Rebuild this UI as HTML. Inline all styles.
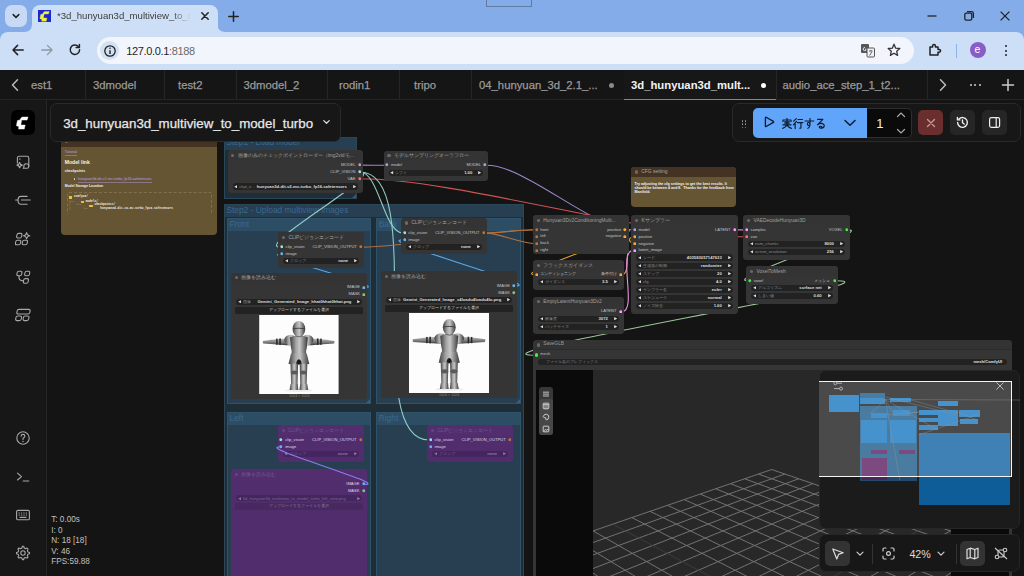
<!DOCTYPE html><html><head><meta charset="utf-8"><style>
html,body{margin:0;padding:0;width:1024px;height:576px;overflow:hidden;background:#141414;font-family:"Liberation Sans", sans-serif;}
*{box-sizing:border-box}
</style></head><body><div style="position:relative;width:1024px;height:576px;overflow:hidden">
<div style="position:absolute;left:47px;top:100px;width:977px;height:476px;background:#141414"></div>
<div style="position:absolute;left:223.7px;top:136.6px;width:133px;height:62.2px;background:rgba(63,120,158,0.25);border:0.8px solid rgba(63,120,158,0.35)"><div style="position:absolute;left:0;top:0;right:0;height:12px;background:rgba(63,120,158,0.25)"></div><div style="position:absolute;left:1.5px;top:0.2px;font-size:8.4px;line-height:1;color:#3a6890;white-space:nowrap">Step1 - Load model</div><div style="position:absolute;right:0;bottom:0;width:0;height:0;border-left:4px solid transparent;border-bottom:4px solid rgba(63,120,158,0.6)"></div></div>
<div style="position:absolute;left:223.9px;top:204.2px;width:300px;height:380px;background:rgba(63,120,158,0.25);border:0.8px solid rgba(63,120,158,0.35)"><div style="position:absolute;left:0;top:0;right:0;height:12px;background:rgba(63,120,158,0.25)"></div><div style="position:absolute;left:1.5px;top:1.0px;font-size:8.4px;line-height:1;color:#3a6890;white-space:nowrap">Step2 - Upload multiview images</div><div style="position:absolute;right:0;bottom:0;width:0;height:0;border-left:4px solid transparent;border-bottom:4px solid rgba(63,120,158,0.6)"></div></div>
<div style="position:absolute;left:227px;top:218.1px;width:143.8px;height:186.3px;background:rgba(63,120,158,0.25);border:0.8px solid rgba(63,120,158,0.35)"><div style="position:absolute;left:0;top:0;right:0;height:12px;background:rgba(63,120,158,0.25)"></div><div style="position:absolute;left:1.5px;top:1.0px;font-size:8.4px;line-height:1;color:#3a6890;white-space:nowrap">Front</div><div style="position:absolute;right:0;bottom:0;width:0;height:0;border-left:4px solid transparent;border-bottom:4px solid rgba(63,120,158,0.6)"></div></div>
<div style="position:absolute;left:376.2px;top:218.1px;width:144.6px;height:186.3px;background:rgba(63,120,158,0.25);border:0.8px solid rgba(63,120,158,0.35)"><div style="position:absolute;left:0;top:0;right:0;height:12px;background:rgba(63,120,158,0.25)"></div><div style="position:absolute;left:1.5px;top:1.0px;font-size:8.4px;line-height:1;color:#3a6890;white-space:nowrap">Back</div><div style="position:absolute;right:0;bottom:0;width:0;height:0;border-left:4px solid transparent;border-bottom:4px solid rgba(63,120,158,0.6)"></div></div>
<div style="position:absolute;left:227px;top:411.5px;width:144px;height:180px;background:rgba(63,120,158,0.25);border:0.8px solid rgba(63,120,158,0.35)"><div style="position:absolute;left:0;top:0;right:0;height:12px;background:rgba(63,120,158,0.25)"></div><div style="position:absolute;left:1.5px;top:1.0px;font-size:8.4px;line-height:1;color:#3a6890;white-space:nowrap">Left</div><div style="position:absolute;right:0;bottom:0;width:0;height:0;border-left:4px solid transparent;border-bottom:4px solid rgba(63,120,158,0.6)"></div></div>
<div style="position:absolute;left:376.2px;top:411.5px;width:144.6px;height:180px;background:rgba(63,120,158,0.25);border:0.8px solid rgba(63,120,158,0.35)"><div style="position:absolute;left:0;top:0;right:0;height:12px;background:rgba(63,120,158,0.25)"></div><div style="position:absolute;left:1.5px;top:1.0px;font-size:8.4px;line-height:1;color:#3a6890;white-space:nowrap">Right</div><div style="position:absolute;right:0;bottom:0;width:0;height:0;border-left:4px solid transparent;border-bottom:4px solid rgba(63,120,158,0.6)"></div></div>
<svg style="position:absolute;left:0;top:0" width="1024" height="576"><path d="M360.1,165.1 C366.4001984095741,165.1 378.99980159042593,165.3 385.3,165.3" stroke="#9c87c8" stroke-width="1.1" fill="none"/><path d="M486.6,165.3 C526.581909971886,165.3 592.918090028114,229.9 632.9,229.9" stroke="#9c87c8" stroke-width="1.1" fill="none"/><path d="M360.1,178.8 C457.41135917764177,178.8 647.6886408223583,236.8 745,236.8" stroke="#d05454" stroke-width="1.1" fill="none"/><path d="M360.1,172 C387.5135231227218,172 252.78647687727823,247.1 280.2,247.1" stroke="#92cbc4" stroke-width="1.1" fill="none"/><path d="M360.1,172 C378.68018097328445,172 384.11981902671556,232.9 402.7,232.9" stroke="#92cbc4" stroke-width="1.1" fill="none"/><path d="M360.1,172 C429.27875848119857,172 359.82124151880146,440 429,440" stroke="#92cbc4" stroke-width="1.1" fill="none"/><path d="M362.5,247.1 C405.76670920003045,247.1 491.4332907999696,229.8 534.7,229.8" stroke="#b06f3c" stroke-width="1.1" fill="none"/><path d="M484.9,232.9 C497.634132282963,232.9 521.9658677170371,243.6 534.7,243.6" stroke="#b06f3c" stroke-width="1.1" fill="none"/><path d="M484.9,232.9 C497.3740981637952,232.9 522.2259018362048,229.8 534.7,229.8" stroke="#b06f3c" stroke-width="1.1" fill="none"/><path d="M365.7,287.5 C388.6571611920986,287.5 257.24283880790136,254 280.2,254" stroke="#5aa8e8" stroke-width="1.1" fill="none"/><path d="M515.5,286 C545.9736361466761,286 372.22636385332396,239.8 402.7,239.8" stroke="#5aa8e8" stroke-width="1.1" fill="none"/><path d="M626.3,229.8 C651.7921556562013,229.8 509.2078443437987,274.6 534.7,274.6" stroke="#e09a2e" stroke-width="1.1" fill="none"/><path d="M622.1,274.6 C631.9281483505288,274.6 623.0718516494712,236.8 632.9,236.8" stroke="#e09a2e" stroke-width="1.1" fill="none"/><path d="M626.3,236.7 C628.7052026941611,236.7 630.4947973058388,243.7 632.9,243.7" stroke="#e09a2e" stroke-width="1.1" fill="none"/><path d="M622.1,311.4 C637.5379402771225,311.4 617.4620597228775,250.6 632.9,250.6" stroke="#e890e0" stroke-width="1.1" fill="none"/><path d="M736.1,229.9 C738.325,229.9 742.775,229.9 745,229.9" stroke="#e890e0" stroke-width="1.1" fill="none"/><path d="M848,229.9 C876.0299170530346,229.9 720.0700829469654,280.8 748.1,280.8" stroke="#9cc49a" stroke-width="1.1" fill="none"/><path d="M836,280.8 C913.5874707990923,280.8 457.1125292009078,355.2 534.7,355.2" stroke="#9cc49a" stroke-width="1.1" fill="none"/></svg>
<div style="position:absolute;left:227.5px;top:150.2px;width:135.3px;height:43px;background:#353535;border-radius:3.5px;overflow:hidden">
<div style="position:absolute;left:0;top:0;width:135.3px;height:10.6px;background:#343434;border-bottom:none"></div>
<div style="position:absolute;left:3.8px;top:3.6999999999999997px;width:3.2px;height:3.2px;border-radius:50%;background:#6a6a6a"></div>
<div style="position:absolute;left:10.2px;top:3.5999999999999996px;font-size:4.9px;line-height:1;color:#a0a0a0;white-space:nowrap">画像のみのチェックポイントローダー（img2vidモ...</div>
<svg style="position:absolute;right:1.6px;top:13.1px" width="3.6" height="3.6"><circle cx="1.8" cy="1.8" r="1.45" fill="#b39ddb"/></svg>
<div style="position:absolute;right:7.3px;top:12.7px;font-size:4.1px;line-height:1;color:#c4c4c4;white-space:nowrap">MODEL</div>
<svg style="position:absolute;right:1.6px;top:19.95px" width="3.6" height="3.6"><circle cx="1.8" cy="1.8" r="1.45" fill="#a1e2dc"/></svg>
<div style="position:absolute;right:7.3px;top:19.55px;font-size:4.1px;line-height:1;color:#c4c4c4;white-space:nowrap">CLIP_VISION</div>
<svg style="position:absolute;right:1.6px;top:26.8px" width="3.6" height="3.6"><circle cx="1.8" cy="1.8" r="1.45" fill="#ff6e6e"/></svg>
<div style="position:absolute;right:7.3px;top:26.400000000000002px;font-size:4.1px;line-height:1;color:#c4c4c4;white-space:nowrap">VAE</div>
<div style="position:absolute;left:5px;right:5px;top:33.199999999999996px;height:6.2px;background:#222;border-radius:3.1px"><svg style="position:absolute;left:1.6px;top:1.4px" width="3.4" height="3.4" viewBox="0 0 3.4 3.4"><path d="M0.2,1.7 L3.2,0.1 L3.2,3.3 Z" fill="#dedede"/></svg><div style="position:absolute;left:6.8px;top:1.3px;font-size:4.1px;line-height:1;color:#8a8a8a;white-space:nowrap">ckpt_n...</div><div style="position:absolute;right:11px;top:1.2px;font-size:4.2px;line-height:1;color:#dedede;white-space:nowrap;font-weight:bold">hunyuan3d-dit-v2-mv-turbo_fp16.safetensors</div><svg style="position:absolute;right:1.6px;top:1.4px" width="3.4" height="3.4" viewBox="0 0 3.4 3.4"><path d="M3.2,1.7 L0.2,0.1 L0.2,3.3 Z" fill="#dedede"/></svg></div>

</div>
<div style="position:absolute;left:383.6px;top:150.6px;width:104.7px;height:30px;background:#353535;border-radius:3.5px;overflow:hidden">
<div style="position:absolute;left:0;top:0;width:104.7px;height:10.4px;background:#343434;border-bottom:none"></div>
<div style="position:absolute;left:3.8px;top:3.6px;width:3.2px;height:3.2px;border-radius:50%;background:#6a6a6a"></div>
<div style="position:absolute;left:10.2px;top:3.5px;font-size:4.9px;line-height:1;color:#a0a0a0;white-space:nowrap">モデルサンプリングオーラフロー</div>
<svg style="position:absolute;left:1.6px;top:12.899999999999999px" width="3.6" height="3.6"><circle cx="1.8" cy="1.8" r="1.45" fill="#b39ddb"/></svg>
<div style="position:absolute;left:7.3px;top:12.5px;font-size:4.1px;line-height:1;color:#c4c4c4;white-space:nowrap">model</div>
<svg style="position:absolute;right:1.6px;top:12.899999999999999px" width="3.6" height="3.6"><circle cx="1.8" cy="1.8" r="1.45" fill="#b39ddb"/></svg>
<div style="position:absolute;right:7.3px;top:12.5px;font-size:4.1px;line-height:1;color:#c4c4c4;white-space:nowrap">MODEL</div>
<div style="position:absolute;left:5px;right:5px;top:19.299999999999997px;height:6.2px;background:#222;border-radius:3.1px"><svg style="position:absolute;left:1.6px;top:1.4px" width="3.4" height="3.4" viewBox="0 0 3.4 3.4"><path d="M0.2,1.7 L3.2,0.1 L3.2,3.3 Z" fill="#dedede"/></svg><div style="position:absolute;left:6.8px;top:1.3px;font-size:4.1px;line-height:1;color:#8a8a8a;white-space:nowrap">シフト</div><div style="position:absolute;right:11px;top:1.2px;font-size:4.2px;line-height:1;color:#dedede;white-space:nowrap;font-weight:bold">1.00</div><svg style="position:absolute;right:1.6px;top:1.4px" width="3.4" height="3.4" viewBox="0 0 3.4 3.4"><path d="M3.2,1.7 L0.2,0.1 L0.2,3.3 Z" fill="#dedede"/></svg></div>

</div>
<div style="position:absolute;left:278.3px;top:232.1px;width:85.9px;height:35.9px;background:#353535;border-radius:3.5px;overflow:hidden">
<div style="position:absolute;left:0;top:0;width:85.9px;height:10.4px;background:#343434;border-bottom:none"></div>
<div style="position:absolute;left:3.8px;top:3.6px;width:3.2px;height:3.2px;border-radius:50%;background:#6a6a6a"></div>
<div style="position:absolute;left:10.2px;top:3.5px;font-size:4.9px;line-height:1;color:#a0a0a0;white-space:nowrap">CLIPビジョンエンコード</div>
<svg style="position:absolute;left:1.6px;top:13.2px" width="3.6" height="3.6"><circle cx="1.8" cy="1.8" r="1.45" fill="#a1e2dc"/></svg>
<div style="position:absolute;left:7.3px;top:12.8px;font-size:4.1px;line-height:1;color:#c4c4c4;white-space:nowrap">clip_vision</div>
<svg style="position:absolute;left:1.6px;top:20.099999999999998px" width="3.6" height="3.6"><circle cx="1.8" cy="1.8" r="1.45" fill="#64b5f6"/></svg>
<div style="position:absolute;left:7.3px;top:19.7px;font-size:4.1px;line-height:1;color:#c4c4c4;white-space:nowrap">image</div>
<svg style="position:absolute;right:1.6px;top:13.2px" width="3.6" height="3.6"><circle cx="1.8" cy="1.8" r="1.45" fill="#b8733e"/></svg>
<div style="position:absolute;right:7.3px;top:12.8px;font-size:4.1px;line-height:1;color:#c4c4c4;white-space:nowrap">CLIP_VISION_OUTPUT</div>
<div style="position:absolute;left:5px;right:5px;top:25.799999999999997px;height:6.2px;background:#222;border-radius:3.1px"><svg style="position:absolute;left:1.6px;top:1.4px" width="3.4" height="3.4" viewBox="0 0 3.4 3.4"><path d="M0.2,1.7 L3.2,0.1 L3.2,3.3 Z" fill="#dedede"/></svg><div style="position:absolute;left:6.8px;top:1.3px;font-size:4.1px;line-height:1;color:#8a8a8a;white-space:nowrap">クロップ</div><div style="position:absolute;right:11px;top:1.2px;font-size:4.2px;line-height:1;color:#dedede;white-space:nowrap;font-weight:bold">none</div><svg style="position:absolute;right:1.6px;top:1.4px" width="3.4" height="3.4" viewBox="0 0 3.4 3.4"><path d="M3.2,1.7 L0.2,0.1 L0.2,3.3 Z" fill="#dedede"/></svg></div>

</div>
<div style="position:absolute;left:401px;top:217.9px;width:85.9px;height:35.9px;background:#353535;border-radius:3.5px;overflow:hidden">
<div style="position:absolute;left:0;top:0;width:85.9px;height:10.4px;background:#343434;border-bottom:none"></div>
<div style="position:absolute;left:3.8px;top:3.6px;width:3.2px;height:3.2px;border-radius:50%;background:#6a6a6a"></div>
<div style="position:absolute;left:10.2px;top:3.5px;font-size:4.9px;line-height:1;color:#a0a0a0;white-space:nowrap">CLIPビジョンエンコード</div>
<svg style="position:absolute;left:1.6px;top:13.2px" width="3.6" height="3.6"><circle cx="1.8" cy="1.8" r="1.45" fill="#a1e2dc"/></svg>
<div style="position:absolute;left:7.3px;top:12.8px;font-size:4.1px;line-height:1;color:#c4c4c4;white-space:nowrap">clip_vision</div>
<svg style="position:absolute;left:1.6px;top:20.099999999999998px" width="3.6" height="3.6"><circle cx="1.8" cy="1.8" r="1.45" fill="#64b5f6"/></svg>
<div style="position:absolute;left:7.3px;top:19.7px;font-size:4.1px;line-height:1;color:#c4c4c4;white-space:nowrap">image</div>
<svg style="position:absolute;right:1.6px;top:13.2px" width="3.6" height="3.6"><circle cx="1.8" cy="1.8" r="1.45" fill="#b8733e"/></svg>
<div style="position:absolute;right:7.3px;top:12.8px;font-size:4.1px;line-height:1;color:#c4c4c4;white-space:nowrap">CLIP_VISION_OUTPUT</div>
<div style="position:absolute;left:5px;right:5px;top:25.799999999999997px;height:6.2px;background:#222;border-radius:3.1px"><svg style="position:absolute;left:1.6px;top:1.4px" width="3.4" height="3.4" viewBox="0 0 3.4 3.4"><path d="M0.2,1.7 L3.2,0.1 L3.2,3.3 Z" fill="#dedede"/></svg><div style="position:absolute;left:6.8px;top:1.3px;font-size:4.1px;line-height:1;color:#8a8a8a;white-space:nowrap">クロップ</div><div style="position:absolute;right:11px;top:1.2px;font-size:4.2px;line-height:1;color:#dedede;white-space:nowrap;font-weight:bold">none</div><svg style="position:absolute;right:1.6px;top:1.4px" width="3.4" height="3.4" viewBox="0 0 3.4 3.4"><path d="M3.2,1.7 L0.2,0.1 L0.2,3.3 Z" fill="#dedede"/></svg></div>

</div>
<div style="position:absolute;left:231.3px;top:272.5px;width:136.1px;height:126.4px;background:#353535;border-radius:3.5px;overflow:hidden">
<div style="position:absolute;left:0;top:0;width:136.1px;height:10.4px;background:#343434;border-bottom:none"></div>
<div style="position:absolute;left:3.8px;top:3.6px;width:3.2px;height:3.2px;border-radius:50%;background:#6a6a6a"></div>
<div style="position:absolute;left:10.2px;top:3.5px;font-size:4.9px;line-height:1;color:#a0a0a0;white-space:nowrap">画像を読み込む</div>
<svg style="position:absolute;right:1.6px;top:13.2px" width="3.6" height="3.6"><circle cx="1.8" cy="1.8" r="1.45" fill="#64b5f6"/></svg>
<div style="position:absolute;right:7.3px;top:12.8px;font-size:4.1px;line-height:1;color:#c4c4c4;white-space:nowrap">IMAGE</div>
<svg style="position:absolute;right:1.6px;top:20.2px" width="3.6" height="3.6"><circle cx="1.8" cy="1.8" r="1.45" fill="#81c784"/></svg>
<div style="position:absolute;right:7.3px;top:19.8px;font-size:4.1px;line-height:1;color:#c4c4c4;white-space:nowrap">MASK</div>
<div style="position:absolute;left:5px;right:5px;top:26.099999999999998px;height:6.2px;background:#222;border-radius:3.1px"><svg style="position:absolute;left:1.6px;top:1.4px" width="3.4" height="3.4" viewBox="0 0 3.4 3.4"><path d="M0.2,1.7 L3.2,0.1 L3.2,3.3 Z" fill="#dedede"/></svg><div style="position:absolute;left:6.8px;top:1.3px;font-size:4.1px;line-height:1;color:#8a8a8a;white-space:nowrap">画像</div><div style="position:absolute;right:11px;top:1.2px;font-size:4.2px;line-height:1;color:#dedede;white-space:nowrap;font-weight:bold">Gemini_Generated_Image_hhat0hhat0hhat.png</div><svg style="position:absolute;right:1.6px;top:1.4px" width="3.4" height="3.4" viewBox="0 0 3.4 3.4"><path d="M3.2,1.7 L0.2,0.1 L0.2,3.3 Z" fill="#dedede"/></svg></div>
<div style="position:absolute;left:4px;right:4px;top:34.300000000000004px;height:6.8px;background:#222;border-radius:1px;font-size:4.2px;line-height:6.8px;text-align:center;color:#dedede">アップロードするファイルを選択</div>
<svg style="position:absolute;left:27.69999999999999px;top:42.19999999999999px" width="79.8" height="79.4" viewBox="0 0 80 80"><defs><linearGradient id="mt" x1="0" x2="1"><stop offset="0" stop-color="#3e3e3e"/><stop offset=".35" stop-color="#a8a8a8"/><stop offset=".55" stop-color="#c4c4c4"/><stop offset="1" stop-color="#3a3a3a"/></linearGradient><linearGradient id="ma" x1="0" y1="0" x2="0" y2="1"><stop offset="0" stop-color="#bdbdbd"/><stop offset=".6" stop-color="#7a7a7a"/><stop offset="1" stop-color="#3a3a3a"/></linearGradient></defs><rect width="80" height="80" fill="#fdfdfd"/><ellipse cx="40" cy="76" rx="14" ry="1.6" fill="#eee"/><path d="M3.5,26.2 Q15,24.4 27,23.6 L53,23.6 Q65,24.4 76,26.2 L75.5,28.8 Q65,29.6 53,30.4 L27,30.4 Q15,29.6 4,28.8 Z" fill="url(#ma)"/><rect x="17" y="23.8" width="1.6" height="6.2" fill="#2a2a2a"/><rect x="20.2" y="23.6" width="1.6" height="6.6" fill="#2a2a2a"/><rect x="61.4" y="23.8" width="1.6" height="6.2" fill="#2a2a2a"/><rect x="58.2" y="23.6" width="1.6" height="6.6" fill="#2a2a2a"/><ellipse cx="31.5" cy="25.2" rx="6.2" ry="5.2" fill="url(#mt)"/><ellipse cx="48.5" cy="25.2" rx="6.2" ry="5.2" fill="url(#mt)"/><path d="M31,22.5 Q40,19.8 49,22.5 L48,33 Q46.5,37 47.5,40 L32.5,40 Q33.5,37 32,33 Z" fill="url(#mt)"/><path d="M40,22 V39" stroke="#d0d0d0" stroke-width="0.6" opacity=".6"/><ellipse cx="40" cy="14.2" rx="6.4" ry="8.2" fill="url(#mt)"/><path d="M34.2,13.8 Q40,12.8 45.8,13.8" stroke="#3a3a3a" stroke-width="0.9" fill="none"/><path d="M36,21 Q40,23 44,21" stroke="#555" stroke-width="0.8" fill="none"/><path d="M32,39 Q40,37.5 48,39 L50.5,49.5 Q40,50.5 29.5,49.5 Z" fill="url(#mt)"/><path d="M37.2,50 Q37.5,45 40,44.6 Q42.5,45 42.8,50 Z" fill="#1a1a1a"/><path d="M31.5,49 L39.2,49 L38.6,70.5 L32.2,70.5 Z" fill="url(#mt)"/><path d="M40.8,49 L48.5,49 L47.8,70.5 L41.4,70.5 Z" fill="url(#mt)"/><ellipse cx="35.4" cy="58" rx="3.6" ry="2" fill="#5a5a5a"/><ellipse cx="44.6" cy="58" rx="3.6" ry="2" fill="#5a5a5a"/><path d="M31.6,69.5 L38.8,69.5 L39.4,75.5 L30.6,75.5 Z" fill="url(#mt)"/><path d="M41.2,69.5 L48.4,69.5 L49.4,75.5 L40.6,75.5 Z" fill="url(#mt)"/></svg><div style="position:absolute;left:0;right:0;top:122.7px;text-align:center;font-size:3.6px;line-height:1;color:#888">1024 × 1024</div>
</div>
<div style="position:absolute;left:381px;top:271px;width:136.2px;height:127px;background:#353535;border-radius:3.5px;overflow:hidden">
<div style="position:absolute;left:0;top:0;width:136.2px;height:10.4px;background:#343434;border-bottom:none"></div>
<div style="position:absolute;left:3.8px;top:3.6px;width:3.2px;height:3.2px;border-radius:50%;background:#6a6a6a"></div>
<div style="position:absolute;left:10.2px;top:3.5px;font-size:4.9px;line-height:1;color:#a0a0a0;white-space:nowrap">画像を読み込む</div>
<svg style="position:absolute;right:1.6px;top:13.2px" width="3.6" height="3.6"><circle cx="1.8" cy="1.8" r="1.45" fill="#64b5f6"/></svg>
<div style="position:absolute;right:7.3px;top:12.8px;font-size:4.1px;line-height:1;color:#c4c4c4;white-space:nowrap">IMAGE</div>
<svg style="position:absolute;right:1.6px;top:20.2px" width="3.6" height="3.6"><circle cx="1.8" cy="1.8" r="1.45" fill="#81c784"/></svg>
<div style="position:absolute;right:7.3px;top:19.8px;font-size:4.1px;line-height:1;color:#c4c4c4;white-space:nowrap">MASK</div>
<div style="position:absolute;left:5px;right:5px;top:26.099999999999998px;height:6.2px;background:#222;border-radius:3.1px"><svg style="position:absolute;left:1.6px;top:1.4px" width="3.4" height="3.4" viewBox="0 0 3.4 3.4"><path d="M0.2,1.7 L3.2,0.1 L3.2,3.3 Z" fill="#dedede"/></svg><div style="position:absolute;left:6.8px;top:1.3px;font-size:4.1px;line-height:1;color:#8a8a8a;white-space:nowrap">画像</div><div style="position:absolute;right:11px;top:1.2px;font-size:4.2px;line-height:1;color:#dedede;white-space:nowrap;font-weight:bold">Gemini_Generated_Image_s4loadu4loadu4lo.png</div><svg style="position:absolute;right:1.6px;top:1.4px" width="3.4" height="3.4" viewBox="0 0 3.4 3.4"><path d="M3.2,1.7 L0.2,0.1 L0.2,3.3 Z" fill="#dedede"/></svg></div>
<div style="position:absolute;left:4px;right:4px;top:34.300000000000004px;height:6.8px;background:#222;border-radius:1px;font-size:4.2px;line-height:6.8px;text-align:center;color:#dedede">アップロードするファイルを選択</div>
<svg style="position:absolute;left:27.899999999999977px;top:41.80000000000001px" width="80.5" height="80.5" viewBox="0 0 80 80"><defs><linearGradient id="mt" x1="0" x2="1"><stop offset="0" stop-color="#3e3e3e"/><stop offset=".35" stop-color="#a8a8a8"/><stop offset=".55" stop-color="#c4c4c4"/><stop offset="1" stop-color="#3a3a3a"/></linearGradient><linearGradient id="ma" x1="0" y1="0" x2="0" y2="1"><stop offset="0" stop-color="#bdbdbd"/><stop offset=".6" stop-color="#7a7a7a"/><stop offset="1" stop-color="#3a3a3a"/></linearGradient></defs><rect width="80" height="80" fill="#fdfdfd"/><ellipse cx="40" cy="76" rx="14" ry="1.6" fill="#eee"/><path d="M3.5,26.2 Q15,24.4 27,23.6 L53,23.6 Q65,24.4 76,26.2 L75.5,28.8 Q65,29.6 53,30.4 L27,30.4 Q15,29.6 4,28.8 Z" fill="url(#ma)"/><rect x="17" y="23.8" width="1.6" height="6.2" fill="#2a2a2a"/><rect x="20.2" y="23.6" width="1.6" height="6.6" fill="#2a2a2a"/><rect x="61.4" y="23.8" width="1.6" height="6.2" fill="#2a2a2a"/><rect x="58.2" y="23.6" width="1.6" height="6.6" fill="#2a2a2a"/><ellipse cx="31.5" cy="25.2" rx="6.2" ry="5.2" fill="url(#mt)"/><ellipse cx="48.5" cy="25.2" rx="6.2" ry="5.2" fill="url(#mt)"/><path d="M31,22.5 Q40,19.8 49,22.5 L48,33 Q46.5,37 47.5,40 L32.5,40 Q33.5,37 32,33 Z" fill="url(#mt)"/><path d="M40,22 V39" stroke="#d0d0d0" stroke-width="0.6" opacity=".6"/><ellipse cx="40" cy="14.2" rx="6.4" ry="8.2" fill="url(#mt)"/><path d="M34.2,13.8 Q40,12.8 45.8,13.8" stroke="#3a3a3a" stroke-width="0.9" fill="none"/><path d="M36,21 Q40,23 44,21" stroke="#555" stroke-width="0.8" fill="none"/><path d="M32,39 Q40,37.5 48,39 L50.5,49.5 Q40,50.5 29.5,49.5 Z" fill="url(#mt)"/><path d="M37.2,50 Q37.5,45 40,44.6 Q42.5,45 42.8,50 Z" fill="#1a1a1a"/><path d="M31.5,49 L39.2,49 L38.6,70.5 L32.2,70.5 Z" fill="url(#mt)"/><path d="M40.8,49 L48.5,49 L47.8,70.5 L41.4,70.5 Z" fill="url(#mt)"/><ellipse cx="35.4" cy="58" rx="3.6" ry="2" fill="#5a5a5a"/><ellipse cx="44.6" cy="58" rx="3.6" ry="2" fill="#5a5a5a"/><path d="M31.6,69.5 L38.8,69.5 L39.4,75.5 L30.6,75.5 Z" fill="url(#mt)"/><path d="M41.2,69.5 L48.4,69.5 L49.4,75.5 L40.6,75.5 Z" fill="url(#mt)"/></svg><div style="position:absolute;left:0;right:0;top:123.2px;text-align:center;font-size:3.6px;line-height:1;color:#888">1024 × 1024</div>
</div>
<div style="position:absolute;left:277.9px;top:425px;width:85.9px;height:36.6px;background:#512d6d;border-radius:3.5px;overflow:hidden">
<div style="position:absolute;left:0;top:0;width:85.9px;height:10.4px;background:#532e6f;border-bottom:none"></div>
<div style="position:absolute;left:3.8px;top:3.6px;width:3.2px;height:3.2px;border-radius:50%;background:#5e4a78"></div>
<div style="position:absolute;left:10.2px;top:3.5px;font-size:4.9px;line-height:1;color:#6e5a88;white-space:nowrap">CLIPビジョンエンコード</div>
<svg style="position:absolute;left:1.6px;top:13.2px" width="3.6" height="3.6"><circle cx="1.8" cy="1.8" r="1.45" fill="#a1e2dc"/></svg>
<div style="position:absolute;left:7.3px;top:12.8px;font-size:4.1px;line-height:1;color:#ddd6e6;white-space:nowrap">clip_vision</div>
<svg style="position:absolute;left:1.6px;top:20.099999999999998px" width="3.6" height="3.6"><circle cx="1.8" cy="1.8" r="1.45" fill="#64b5f6"/></svg>
<div style="position:absolute;left:7.3px;top:19.7px;font-size:4.1px;line-height:1;color:#ddd6e6;white-space:nowrap">image</div>
<svg style="position:absolute;right:1.6px;top:13.2px" width="3.6" height="3.6"><circle cx="1.8" cy="1.8" r="1.45" fill="#b8733e"/></svg>
<div style="position:absolute;right:7.3px;top:12.8px;font-size:4.1px;line-height:1;color:#ddd6e6;white-space:nowrap">CLIP_VISION_OUTPUT</div>
<div style="position:absolute;left:5px;right:5px;top:25.9px;height:6.2px;background:#45255f;border-radius:3.1px"><svg style="position:absolute;left:1.6px;top:1.4px" width="3.4" height="3.4" viewBox="0 0 3.4 3.4"><path d="M0.2,1.7 L3.2,0.1 L3.2,3.3 Z" fill="#8a7a9a"/></svg><div style="position:absolute;left:6.8px;top:1.3px;font-size:4.1px;line-height:1;color:#7a6a8a;white-space:nowrap">クロップ</div><div style="position:absolute;right:11px;top:1.2px;font-size:4.2px;line-height:1;color:#8a7a9a;white-space:nowrap;font-weight:bold">none</div><svg style="position:absolute;right:1.6px;top:1.4px" width="3.4" height="3.4" viewBox="0 0 3.4 3.4"><path d="M3.2,1.7 L0.2,0.1 L0.2,3.3 Z" fill="#8a7a9a"/></svg></div>

</div>
<div style="position:absolute;left:427.25px;top:425px;width:85.9px;height:36.6px;background:#512d6d;border-radius:3.5px;overflow:hidden">
<div style="position:absolute;left:0;top:0;width:85.9px;height:10.4px;background:#532e6f;border-bottom:none"></div>
<div style="position:absolute;left:3.8px;top:3.6px;width:3.2px;height:3.2px;border-radius:50%;background:#5e4a78"></div>
<div style="position:absolute;left:10.2px;top:3.5px;font-size:4.9px;line-height:1;color:#6e5a88;white-space:nowrap">CLIPビジョンエンコード</div>
<svg style="position:absolute;left:1.6px;top:13.2px" width="3.6" height="3.6"><circle cx="1.8" cy="1.8" r="1.45" fill="#a1e2dc"/></svg>
<div style="position:absolute;left:7.3px;top:12.8px;font-size:4.1px;line-height:1;color:#ddd6e6;white-space:nowrap">clip_vision</div>
<svg style="position:absolute;left:1.6px;top:20.099999999999998px" width="3.6" height="3.6"><circle cx="1.8" cy="1.8" r="1.45" fill="#64b5f6"/></svg>
<div style="position:absolute;left:7.3px;top:19.7px;font-size:4.1px;line-height:1;color:#ddd6e6;white-space:nowrap">image</div>
<svg style="position:absolute;right:1.6px;top:13.2px" width="3.6" height="3.6"><circle cx="1.8" cy="1.8" r="1.45" fill="#b8733e"/></svg>
<div style="position:absolute;right:7.3px;top:12.8px;font-size:4.1px;line-height:1;color:#ddd6e6;white-space:nowrap">CLIP_VISION_OUTPUT</div>
<div style="position:absolute;left:5px;right:5px;top:25.9px;height:6.2px;background:#45255f;border-radius:3.1px"><svg style="position:absolute;left:1.6px;top:1.4px" width="3.4" height="3.4" viewBox="0 0 3.4 3.4"><path d="M0.2,1.7 L3.2,0.1 L3.2,3.3 Z" fill="#8a7a9a"/></svg><div style="position:absolute;left:6.8px;top:1.3px;font-size:4.1px;line-height:1;color:#7a6a8a;white-space:nowrap">クロップ</div><div style="position:absolute;right:11px;top:1.2px;font-size:4.2px;line-height:1;color:#8a7a9a;white-space:nowrap;font-weight:bold">none</div><svg style="position:absolute;right:1.6px;top:1.4px" width="3.4" height="3.4" viewBox="0 0 3.4 3.4"><path d="M3.2,1.7 L0.2,0.1 L0.2,3.3 Z" fill="#8a7a9a"/></svg></div>

</div>
<div style="position:absolute;left:231px;top:469.2px;width:135.8px;height:130px;background:#512d6d;border-radius:3.5px;overflow:hidden">
<div style="position:absolute;left:0;top:0;width:135.8px;height:10.4px;background:#532e6f;border-bottom:none"></div>
<div style="position:absolute;left:3.8px;top:3.6px;width:3.2px;height:3.2px;border-radius:50%;background:#5e4a78"></div>
<div style="position:absolute;left:10.2px;top:3.5px;font-size:4.9px;line-height:1;color:#6e5a88;white-space:nowrap">画像を読み込む</div>
<svg style="position:absolute;right:1.6px;top:13.2px" width="3.6" height="3.6"><circle cx="1.8" cy="1.8" r="1.45" fill="#64b5f6"/></svg>
<div style="position:absolute;right:7.3px;top:12.8px;font-size:4.1px;line-height:1;color:#ddd6e6;white-space:nowrap">IMAGE</div>
<svg style="position:absolute;right:1.6px;top:20.2px" width="3.6" height="3.6"><circle cx="1.8" cy="1.8" r="1.45" fill="#81c784"/></svg>
<div style="position:absolute;right:7.3px;top:19.8px;font-size:4.1px;line-height:1;color:#ddd6e6;white-space:nowrap">MASK</div>
<div style="position:absolute;left:5px;right:5px;top:26.099999999999998px;height:6.2px;background:#45255f;border-radius:3.1px"><svg style="position:absolute;left:1.6px;top:1.4px" width="3.4" height="3.4" viewBox="0 0 3.4 3.4"><path d="M0.2,1.7 L3.2,0.1 L3.2,3.3 Z" fill="#8a7a9a"/></svg><div style="position:absolute;left:6.8px;top:1.3px;font-size:4.1px;line-height:1;color:#7a6a8a;white-space:nowrap">3d_hunyuan3d_multiview_to_model_turbo_left_view.png</div><div style="position:absolute;right:11px;top:1.2px;font-size:4.2px;line-height:1;color:#8a7a9a;white-space:nowrap;font-weight:bold"></div><svg style="position:absolute;right:1.6px;top:1.4px" width="3.4" height="3.4" viewBox="0 0 3.4 3.4"><path d="M3.2,1.7 L0.2,0.1 L0.2,3.3 Z" fill="#8a7a9a"/></svg></div>
<div style="position:absolute;left:4px;right:4px;top:34.300000000000004px;height:6.8px;background:#47285f;border-radius:1px;font-size:4.2px;line-height:6.8px;text-align:center;color:#8a7a9a">アップロードするファイルを選択</div>

</div>
<div style="position:absolute;left:533px;top:215px;width:95.5px;height:38.75px;background:#353535;border-radius:3.5px;overflow:hidden">
<div style="position:absolute;left:0;top:0;width:95.5px;height:10.4px;background:#343434;border-bottom:none"></div>
<div style="position:absolute;left:3.8px;top:3.6px;width:3.2px;height:3.2px;border-radius:50%;background:#6a6a6a"></div>
<div style="position:absolute;left:10.2px;top:3.5px;font-size:4.9px;line-height:1;color:#a0a0a0;white-space:nowrap">Hunyuan3Dv2ConditioningMulti...</div>
<svg style="position:absolute;left:1.6px;top:13.0px" width="3.6" height="3.6"><circle cx="1.8" cy="1.8" r="1.45" fill="#b8733e"/></svg>
<div style="position:absolute;left:7.3px;top:12.600000000000001px;font-size:4.1px;line-height:1;color:#c4c4c4;white-space:nowrap">front</div>
<svg style="position:absolute;left:1.6px;top:19.849999999999998px" width="3.6" height="3.6"><circle cx="1.8" cy="1.8" r="1.45" fill="#b8733e"/></svg>
<div style="position:absolute;left:7.3px;top:19.45px;font-size:4.1px;line-height:1;color:#c4c4c4;white-space:nowrap">left</div>
<svg style="position:absolute;left:1.6px;top:26.7px" width="3.6" height="3.6"><circle cx="1.8" cy="1.8" r="1.45" fill="#b8733e"/></svg>
<div style="position:absolute;left:7.3px;top:26.3px;font-size:4.1px;line-height:1;color:#c4c4c4;white-space:nowrap">back</div>
<svg style="position:absolute;left:1.6px;top:33.55px" width="3.6" height="3.6"><circle cx="1.8" cy="1.8" r="1.45" fill="#b8733e"/></svg>
<div style="position:absolute;left:7.3px;top:33.14999999999999px;font-size:4.1px;line-height:1;color:#c4c4c4;white-space:nowrap">right</div>
<svg style="position:absolute;right:1.6px;top:13.0px" width="3.6" height="3.6"><circle cx="1.8" cy="1.8" r="1.45" fill="#ffa931"/></svg>
<div style="position:absolute;right:7.3px;top:12.600000000000001px;font-size:4.1px;line-height:1;color:#c4c4c4;white-space:nowrap">positive</div>
<svg style="position:absolute;right:1.6px;top:19.849999999999998px" width="3.6" height="3.6"><circle cx="1.8" cy="1.8" r="1.45" fill="#ffa931"/></svg>
<div style="position:absolute;right:7.3px;top:19.45px;font-size:4.1px;line-height:1;color:#c4c4c4;white-space:nowrap">negative</div>

</div>
<div style="position:absolute;left:533px;top:260px;width:90.8px;height:30.2px;background:#353535;border-radius:3.5px;overflow:hidden">
<div style="position:absolute;left:0;top:0;width:90.8px;height:10.4px;background:#343434;border-bottom:none"></div>
<div style="position:absolute;left:3.8px;top:3.6px;width:3.2px;height:3.2px;border-radius:50%;background:#6a6a6a"></div>
<div style="position:absolute;left:10.2px;top:3.5px;font-size:4.9px;line-height:1;color:#a0a0a0;white-space:nowrap">フラックスガイダンス</div>
<svg style="position:absolute;left:1.6px;top:12.799999999999999px" width="3.6" height="3.6"><circle cx="1.8" cy="1.8" r="1.45" fill="#ffa931"/></svg>
<div style="position:absolute;left:7.3px;top:12.399999999999999px;font-size:4.1px;line-height:1;color:#c4c4c4;white-space:nowrap">コンディショニング</div>
<svg style="position:absolute;right:1.6px;top:12.799999999999999px" width="3.6" height="3.6"><circle cx="1.8" cy="1.8" r="1.45" fill="#ffa931"/></svg>
<div style="position:absolute;right:7.3px;top:12.399999999999999px;font-size:4.1px;line-height:1;color:#c4c4c4;white-space:nowrap">条件付け</div>
<div style="position:absolute;left:5px;right:5px;top:19.099999999999998px;height:6.2px;background:#222;border-radius:3.1px"><svg style="position:absolute;left:1.6px;top:1.4px" width="3.4" height="3.4" viewBox="0 0 3.4 3.4"><path d="M0.2,1.7 L3.2,0.1 L3.2,3.3 Z" fill="#dedede"/></svg><div style="position:absolute;left:6.8px;top:1.3px;font-size:4.1px;line-height:1;color:#8a8a8a;white-space:nowrap">ガイダンス</div><div style="position:absolute;right:11px;top:1.2px;font-size:4.2px;line-height:1;color:#dedede;white-space:nowrap;font-weight:bold">3.5</div><svg style="position:absolute;right:1.6px;top:1.4px" width="3.4" height="3.4" viewBox="0 0 3.4 3.4"><path d="M3.2,1.7 L0.2,0.1 L0.2,3.3 Z" fill="#dedede"/></svg></div>

</div>
<div style="position:absolute;left:533px;top:296.5px;width:90.8px;height:37.1px;background:#353535;border-radius:3.5px;overflow:hidden">
<div style="position:absolute;left:0;top:0;width:90.8px;height:10.4px;background:#343434;border-bottom:none"></div>
<div style="position:absolute;left:3.8px;top:3.6px;width:3.2px;height:3.2px;border-radius:50%;background:#6a6a6a"></div>
<div style="position:absolute;left:10.2px;top:3.5px;font-size:4.9px;line-height:1;color:#a0a0a0;white-space:nowrap">EmptyLatentHunyuan3Dv2</div>
<svg style="position:absolute;right:1.6px;top:13.1px" width="3.6" height="3.6"><circle cx="1.8" cy="1.8" r="1.45" fill="#ff9cf9"/></svg>
<div style="position:absolute;right:7.3px;top:12.7px;font-size:4.1px;line-height:1;color:#c4c4c4;white-space:nowrap">LATENT</div>
<div style="position:absolute;left:5px;right:5px;top:19.099999999999998px;height:6.2px;background:#222;border-radius:3.1px"><svg style="position:absolute;left:1.6px;top:1.4px" width="3.4" height="3.4" viewBox="0 0 3.4 3.4"><path d="M0.2,1.7 L3.2,0.1 L3.2,3.3 Z" fill="#dedede"/></svg><div style="position:absolute;left:6.8px;top:1.3px;font-size:4.1px;line-height:1;color:#8a8a8a;white-space:nowrap">解像度</div><div style="position:absolute;right:11px;top:1.2px;font-size:4.2px;line-height:1;color:#dedede;white-space:nowrap;font-weight:bold">3072</div><svg style="position:absolute;right:1.6px;top:1.4px" width="3.4" height="3.4" viewBox="0 0 3.4 3.4"><path d="M3.2,1.7 L0.2,0.1 L0.2,3.3 Z" fill="#dedede"/></svg></div>
<div style="position:absolute;left:5px;right:5px;top:27.099999999999998px;height:6.2px;background:#222;border-radius:3.1px"><svg style="position:absolute;left:1.6px;top:1.4px" width="3.4" height="3.4" viewBox="0 0 3.4 3.4"><path d="M0.2,1.7 L3.2,0.1 L3.2,3.3 Z" fill="#dedede"/></svg><div style="position:absolute;left:6.8px;top:1.3px;font-size:4.1px;line-height:1;color:#8a8a8a;white-space:nowrap">バッチサイズ</div><div style="position:absolute;right:11px;top:1.2px;font-size:4.2px;line-height:1;color:#dedede;white-space:nowrap;font-weight:bold">1</div><svg style="position:absolute;right:1.6px;top:1.4px" width="3.4" height="3.4" viewBox="0 0 3.4 3.4"><path d="M3.2,1.7 L0.2,0.1 L0.2,3.3 Z" fill="#dedede"/></svg></div>

</div>
<div style="position:absolute;left:631.2px;top:215px;width:106.6px;height:98.5px;background:#353535;border-radius:3.5px;overflow:hidden">
<div style="position:absolute;left:0;top:0;width:106.6px;height:10.4px;background:#343434;border-bottom:none"></div>
<div style="position:absolute;left:3.8px;top:3.6px;width:3.2px;height:3.2px;border-radius:50%;background:#6a6a6a"></div>
<div style="position:absolute;left:10.2px;top:3.5px;font-size:4.9px;line-height:1;color:#a0a0a0;white-space:nowrap">Kサンプラー</div>
<svg style="position:absolute;left:1.6px;top:13.1px" width="3.6" height="3.6"><circle cx="1.8" cy="1.8" r="1.45" fill="#b39ddb"/></svg>
<div style="position:absolute;left:7.3px;top:12.7px;font-size:4.1px;line-height:1;color:#c4c4c4;white-space:nowrap">model</div>
<svg style="position:absolute;left:1.6px;top:20.0px" width="3.6" height="3.6"><circle cx="1.8" cy="1.8" r="1.45" fill="#ffa931"/></svg>
<div style="position:absolute;left:7.3px;top:19.6px;font-size:4.1px;line-height:1;color:#c4c4c4;white-space:nowrap">positive</div>
<svg style="position:absolute;left:1.6px;top:26.900000000000002px" width="3.6" height="3.6"><circle cx="1.8" cy="1.8" r="1.45" fill="#ffa931"/></svg>
<div style="position:absolute;left:7.3px;top:26.500000000000004px;font-size:4.1px;line-height:1;color:#c4c4c4;white-space:nowrap">negative</div>
<svg style="position:absolute;left:1.6px;top:33.800000000000004px" width="3.6" height="3.6"><circle cx="1.8" cy="1.8" r="1.45" fill="#ff9cf9"/></svg>
<div style="position:absolute;left:7.3px;top:33.4px;font-size:4.1px;line-height:1;color:#c4c4c4;white-space:nowrap">latent_image</div>
<svg style="position:absolute;right:1.6px;top:13.1px" width="3.6" height="3.6"><circle cx="1.8" cy="1.8" r="1.45" fill="#ff9cf9"/></svg>
<div style="position:absolute;right:7.3px;top:12.7px;font-size:4.1px;line-height:1;color:#c4c4c4;white-space:nowrap">LATENT</div>
<div style="position:absolute;left:5px;right:5px;top:39.4px;height:6.2px;background:#222;border-radius:3.1px"><svg style="position:absolute;left:1.6px;top:1.4px" width="3.4" height="3.4" viewBox="0 0 3.4 3.4"><path d="M0.2,1.7 L3.2,0.1 L3.2,3.3 Z" fill="#dedede"/></svg><div style="position:absolute;left:6.8px;top:1.3px;font-size:4.1px;line-height:1;color:#8a8a8a;white-space:nowrap">シード</div><div style="position:absolute;right:11px;top:1.2px;font-size:4.2px;line-height:1;color:#dedede;white-space:nowrap;font-weight:bold">403583057147633</div><svg style="position:absolute;right:1.6px;top:1.4px" width="3.4" height="3.4" viewBox="0 0 3.4 3.4"><path d="M3.2,1.7 L0.2,0.1 L0.2,3.3 Z" fill="#dedede"/></svg></div>
<div style="position:absolute;left:5px;right:5px;top:47.5px;height:6.2px;background:#222;border-radius:3.1px"><svg style="position:absolute;left:1.6px;top:1.4px" width="3.4" height="3.4" viewBox="0 0 3.4 3.4"><path d="M0.2,1.7 L3.2,0.1 L3.2,3.3 Z" fill="#dedede"/></svg><div style="position:absolute;left:6.8px;top:1.3px;font-size:4.1px;line-height:1;color:#8a8a8a;white-space:nowrap">生成後の制御</div><div style="position:absolute;right:11px;top:1.2px;font-size:4.2px;line-height:1;color:#dedede;white-space:nowrap;font-weight:bold">randomize</div><svg style="position:absolute;right:1.6px;top:1.4px" width="3.4" height="3.4" viewBox="0 0 3.4 3.4"><path d="M3.2,1.7 L0.2,0.1 L0.2,3.3 Z" fill="#dedede"/></svg></div>
<div style="position:absolute;left:5px;right:5px;top:55.6px;height:6.2px;background:#222;border-radius:3.1px"><svg style="position:absolute;left:1.6px;top:1.4px" width="3.4" height="3.4" viewBox="0 0 3.4 3.4"><path d="M0.2,1.7 L3.2,0.1 L3.2,3.3 Z" fill="#dedede"/></svg><div style="position:absolute;left:6.8px;top:1.3px;font-size:4.1px;line-height:1;color:#8a8a8a;white-space:nowrap">ステップ</div><div style="position:absolute;right:11px;top:1.2px;font-size:4.2px;line-height:1;color:#dedede;white-space:nowrap;font-weight:bold">20</div><svg style="position:absolute;right:1.6px;top:1.4px" width="3.4" height="3.4" viewBox="0 0 3.4 3.4"><path d="M3.2,1.7 L0.2,0.1 L0.2,3.3 Z" fill="#dedede"/></svg></div>
<div style="position:absolute;left:5px;right:5px;top:63.699999999999996px;height:6.2px;background:#222;border-radius:3.1px"><svg style="position:absolute;left:1.6px;top:1.4px" width="3.4" height="3.4" viewBox="0 0 3.4 3.4"><path d="M0.2,1.7 L3.2,0.1 L3.2,3.3 Z" fill="#dedede"/></svg><div style="position:absolute;left:6.8px;top:1.3px;font-size:4.1px;line-height:1;color:#8a8a8a;white-space:nowrap">cfg</div><div style="position:absolute;right:11px;top:1.2px;font-size:4.2px;line-height:1;color:#dedede;white-space:nowrap;font-weight:bold">4.0</div><svg style="position:absolute;right:1.6px;top:1.4px" width="3.4" height="3.4" viewBox="0 0 3.4 3.4"><path d="M3.2,1.7 L0.2,0.1 L0.2,3.3 Z" fill="#dedede"/></svg></div>
<div style="position:absolute;left:5px;right:5px;top:71.80000000000001px;height:6.2px;background:#222;border-radius:3.1px"><svg style="position:absolute;left:1.6px;top:1.4px" width="3.4" height="3.4" viewBox="0 0 3.4 3.4"><path d="M0.2,1.7 L3.2,0.1 L3.2,3.3 Z" fill="#dedede"/></svg><div style="position:absolute;left:6.8px;top:1.3px;font-size:4.1px;line-height:1;color:#8a8a8a;white-space:nowrap">サンプラー名</div><div style="position:absolute;right:11px;top:1.2px;font-size:4.2px;line-height:1;color:#dedede;white-space:nowrap;font-weight:bold">euler</div><svg style="position:absolute;right:1.6px;top:1.4px" width="3.4" height="3.4" viewBox="0 0 3.4 3.4"><path d="M3.2,1.7 L0.2,0.1 L0.2,3.3 Z" fill="#dedede"/></svg></div>
<div style="position:absolute;left:5px;right:5px;top:79.9px;height:6.2px;background:#222;border-radius:3.1px"><svg style="position:absolute;left:1.6px;top:1.4px" width="3.4" height="3.4" viewBox="0 0 3.4 3.4"><path d="M0.2,1.7 L3.2,0.1 L3.2,3.3 Z" fill="#dedede"/></svg><div style="position:absolute;left:6.8px;top:1.3px;font-size:4.1px;line-height:1;color:#8a8a8a;white-space:nowrap">スケジューラ</div><div style="position:absolute;right:11px;top:1.2px;font-size:4.2px;line-height:1;color:#dedede;white-space:nowrap;font-weight:bold">normal</div><svg style="position:absolute;right:1.6px;top:1.4px" width="3.4" height="3.4" viewBox="0 0 3.4 3.4"><path d="M3.2,1.7 L0.2,0.1 L0.2,3.3 Z" fill="#dedede"/></svg></div>
<div style="position:absolute;left:5px;right:5px;top:88.0px;height:6.2px;background:#222;border-radius:3.1px"><svg style="position:absolute;left:1.6px;top:1.4px" width="3.4" height="3.4" viewBox="0 0 3.4 3.4"><path d="M0.2,1.7 L3.2,0.1 L3.2,3.3 Z" fill="#dedede"/></svg><div style="position:absolute;left:6.8px;top:1.3px;font-size:4.1px;line-height:1;color:#8a8a8a;white-space:nowrap">ノイズ除去</div><div style="position:absolute;right:11px;top:1.2px;font-size:4.2px;line-height:1;color:#dedede;white-space:nowrap;font-weight:bold">1.00</div><svg style="position:absolute;right:1.6px;top:1.4px" width="3.4" height="3.4" viewBox="0 0 3.4 3.4"><path d="M3.2,1.7 L0.2,0.1 L0.2,3.3 Z" fill="#dedede"/></svg></div>

</div>
<div style="position:absolute;left:743.3px;top:215px;width:106.5px;height:44.8px;background:#353535;border-radius:3.5px;overflow:hidden">
<div style="position:absolute;left:0;top:0;width:106.5px;height:10.4px;background:#343434;border-bottom:none"></div>
<div style="position:absolute;left:3.8px;top:3.6px;width:3.2px;height:3.2px;border-radius:50%;background:#6a6a6a"></div>
<div style="position:absolute;left:10.2px;top:3.5px;font-size:4.9px;line-height:1;color:#a0a0a0;white-space:nowrap">VAEDecodeHunyuan3D</div>
<svg style="position:absolute;left:1.6px;top:13.1px" width="3.6" height="3.6"><circle cx="1.8" cy="1.8" r="1.45" fill="#ff9cf9"/></svg>
<div style="position:absolute;left:7.3px;top:12.7px;font-size:4.1px;line-height:1;color:#c4c4c4;white-space:nowrap">samples</div>
<svg style="position:absolute;left:1.6px;top:20.0px" width="3.6" height="3.6"><circle cx="1.8" cy="1.8" r="1.45" fill="#ff6e6e"/></svg>
<div style="position:absolute;left:7.3px;top:19.6px;font-size:4.1px;line-height:1;color:#c4c4c4;white-space:nowrap">vae</div>
<svg style="position:absolute;right:1.6px;top:13.1px" width="3.6" height="3.6"><circle cx="1.8" cy="1.8" r="1.45" fill="#44ee44"/></svg>
<div style="position:absolute;right:7.3px;top:12.7px;font-size:4.1px;line-height:1;color:#c4c4c4;white-space:nowrap">VOXEL</div>
<div style="position:absolute;left:5px;right:5px;top:25.599999999999998px;height:6.2px;background:#222;border-radius:3.1px"><svg style="position:absolute;left:1.6px;top:1.4px" width="3.4" height="3.4" viewBox="0 0 3.4 3.4"><path d="M0.2,1.7 L3.2,0.1 L3.2,3.3 Z" fill="#dedede"/></svg><div style="position:absolute;left:6.8px;top:1.3px;font-size:4.1px;line-height:1;color:#8a8a8a;white-space:nowrap">num_chunks</div><div style="position:absolute;right:11px;top:1.2px;font-size:4.2px;line-height:1;color:#dedede;white-space:nowrap;font-weight:bold">8000</div><svg style="position:absolute;right:1.6px;top:1.4px" width="3.4" height="3.4" viewBox="0 0 3.4 3.4"><path d="M3.2,1.7 L0.2,0.1 L0.2,3.3 Z" fill="#dedede"/></svg></div>
<div style="position:absolute;left:5px;right:5px;top:33.8px;height:6.2px;background:#222;border-radius:3.1px"><svg style="position:absolute;left:1.6px;top:1.4px" width="3.4" height="3.4" viewBox="0 0 3.4 3.4"><path d="M0.2,1.7 L3.2,0.1 L3.2,3.3 Z" fill="#dedede"/></svg><div style="position:absolute;left:6.8px;top:1.3px;font-size:4.1px;line-height:1;color:#8a8a8a;white-space:nowrap">octree_resolution</div><div style="position:absolute;right:11px;top:1.2px;font-size:4.2px;line-height:1;color:#dedede;white-space:nowrap;font-weight:bold">256</div><svg style="position:absolute;right:1.6px;top:1.4px" width="3.4" height="3.4" viewBox="0 0 3.4 3.4"><path d="M3.2,1.7 L0.2,0.1 L0.2,3.3 Z" fill="#dedede"/></svg></div>

</div>
<div style="position:absolute;left:746.4px;top:266.25px;width:91.3px;height:37.25px;background:#353535;border-radius:3.5px;overflow:hidden">
<div style="position:absolute;left:0;top:0;width:91.3px;height:10.4px;background:#343434;border-bottom:none"></div>
<div style="position:absolute;left:3.8px;top:3.6px;width:3.2px;height:3.2px;border-radius:50%;background:#6a6a6a"></div>
<div style="position:absolute;left:10.2px;top:3.5px;font-size:4.9px;line-height:1;color:#a0a0a0;white-space:nowrap">VoxelToMesh</div>
<svg style="position:absolute;left:1.6px;top:12.7px" width="3.6" height="3.6"><circle cx="1.8" cy="1.8" r="1.45" fill="#44ee44"/></svg>
<div style="position:absolute;left:7.3px;top:12.3px;font-size:4.1px;line-height:1;color:#c4c4c4;white-space:nowrap">voxel</div>
<svg style="position:absolute;right:1.6px;top:12.7px" width="3.6" height="3.6"><circle cx="1.8" cy="1.8" r="1.45" fill="#44ee44"/></svg>
<div style="position:absolute;right:7.3px;top:12.3px;font-size:4.1px;line-height:1;color:#c4c4c4;white-space:nowrap">メッシュ</div>
<div style="position:absolute;left:5px;right:5px;top:18.5px;height:6.2px;background:#222;border-radius:3.1px"><svg style="position:absolute;left:1.6px;top:1.4px" width="3.4" height="3.4" viewBox="0 0 3.4 3.4"><path d="M0.2,1.7 L3.2,0.1 L3.2,3.3 Z" fill="#dedede"/></svg><div style="position:absolute;left:6.8px;top:1.3px;font-size:4.1px;line-height:1;color:#8a8a8a;white-space:nowrap">アルゴリズム</div><div style="position:absolute;right:11px;top:1.2px;font-size:4.2px;line-height:1;color:#dedede;white-space:nowrap;font-weight:bold">surface net</div><svg style="position:absolute;right:1.6px;top:1.4px" width="3.4" height="3.4" viewBox="0 0 3.4 3.4"><path d="M3.2,1.7 L0.2,0.1 L0.2,3.3 Z" fill="#dedede"/></svg></div>
<div style="position:absolute;left:5px;right:5px;top:26.8px;height:6.2px;background:#222;border-radius:3.1px"><svg style="position:absolute;left:1.6px;top:1.4px" width="3.4" height="3.4" viewBox="0 0 3.4 3.4"><path d="M0.2,1.7 L3.2,0.1 L3.2,3.3 Z" fill="#dedede"/></svg><div style="position:absolute;left:6.8px;top:1.3px;font-size:4.1px;line-height:1;color:#8a8a8a;white-space:nowrap">しきい値</div><div style="position:absolute;right:11px;top:1.2px;font-size:4.2px;line-height:1;color:#dedede;white-space:nowrap;font-weight:bold">0.60</div><svg style="position:absolute;right:1.6px;top:1.4px" width="3.4" height="3.4" viewBox="0 0 3.4 3.4"><path d="M3.2,1.7 L0.2,0.1 L0.2,3.3 Z" fill="#dedede"/></svg></div>

</div>
<svg style="position:absolute;left:0;top:0" width="1024" height="576"><path d="M365.2,484.4 C388.563446342524,484.4 256.236553657476,446.9 279.6,446.9" stroke="#8a7cf0" stroke-width="1.1" fill="none"/></svg>
<div style="position:absolute;left:631.1px;top:167px;width:105.2px;height:40.2px;background:#665533;border-radius:4px;overflow:hidden"><div style="position:absolute;left:0;top:0;right:0;height:10.2px;background:#443322"></div><div style="position:absolute;left:4px;top:3.4px;width:3.4px;height:3.4px;border-radius:50%;background:#776655"></div><div style="position:absolute;left:10.2px;top:2.6px;font-size:4.9px;line-height:1;color:#a8a8a8">CFG setting</div><div style="position:absolute;left:3.5px;top:14.5px;width:100px;font-size:3.6px;line-height:4.2px;color:#f2f2f2;font-weight:bold">Try adjusting the cfg settings to get the best results. It<br>should be between 4 and 8.&nbsp; Thanks for the feedback from<br>Manifold.</div></div>
<div style="position:absolute;left:533px;top:339.8px;width:478.6px;height:260px;background:#353535;border-radius:4px;overflow:hidden"><div style="position:absolute;left:0;top:0;right:0;height:10.3px;background:#333;border-bottom:0.8px solid #2c2c2c"></div><div style="position:absolute;left:4px;top:3.4px;width:3.4px;height:3.4px;border-radius:50%;background:#666"></div><div style="position:absolute;left:10.2px;top:2.6px;font-size:4.9px;line-height:1;color:#9a9a9a">SaveGLB</div><div style="position:absolute;left:1.5px;top:13.2px;width:3.6px;height:3.6px;border-radius:50%;background:#44ee44"></div><div style="position:absolute;left:7.3px;top:12.7px;font-size:4.1px;line-height:1;color:#bbb">mesh</div><div style="position:absolute;left:5px;right:5px;top:19.2px;height:6.4px;background:#222;border-radius:3.2px"><div style="position:absolute;left:8px;top:1.1px;font-size:4px;line-height:1;color:#888">ファイル名のプレフィックス</div><div style="position:absolute;right:4.5px;top:1px;font-size:4.1px;line-height:1;color:#e0e0e0;font-weight:bold">mesh/ComfyUI</div></div><div style="position:absolute;left:3px;top:30.4px;width:472.6px;height:240px;background:#0a0a0a"></div><div style="position:absolute;left:60.2px;top:30.4px;width:357.7px;height:240px;background:#282828"></div></div>
<svg style="position:absolute;left:593.2px;top:370.9px" width="357.7" height="206" viewBox="593.2 370.9 357.7 206"><path d="M771.90,469.40 L765.34,471.66 L758.66,473.95 L751.85,476.29 L744.92,478.68 L737.86,481.11 L730.66,483.58 L723.32,486.11 L715.83,488.68 L708.20,491.30 L700.42,493.98 L692.48,496.71 L684.38,499.49 L676.11,502.34 L667.67,505.24 L659.06,508.20 L650.26,511.23 L641.27,514.32 L632.09,517.47 L622.70,520.70 L613.11,524.00 L603.31,527.37 L593.28,530.82 L583.02,534.35 L572.52,537.95 L561.78,541.65 L550.79,545.43 L539.53,549.30 L527.99,553.27 L516.17,557.33 L504.06,561.50 L491.64,565.77 L478.91,570.14 L465.85,574.64 L452.44,579.25 L438.68,583.98 L424.54,588.84 L410.03,593.83 L395.11,598.96 L379.77,604.23 L363.99,609.66" stroke="#7a7a7a" stroke-width="0.9" fill="none"/><path d="M771.90,469.40 L778.46,471.66 L785.14,473.95 L791.95,476.29 L798.88,478.68 L805.94,481.11 L813.14,483.58 L820.48,486.11 L827.97,488.68 L835.60,491.30 L843.38,493.98 L851.32,496.71 L859.42,499.49 L867.69,502.34 L876.13,505.24 L884.74,508.20 L893.54,511.23 L902.53,514.32 L911.71,517.47 L921.10,520.70 L930.69,524.00 L940.49,527.37 L950.52,530.82 L960.78,534.35 L971.28,537.95 L982.02,541.65 L993.01,545.43 L1004.27,549.30 L1015.81,553.27 L1027.63,557.33 L1039.74,561.50 L1052.16,565.77 L1064.89,570.14 L1077.95,574.64 L1091.36,579.25 L1105.12,583.98 L1119.26,588.84 L1133.77,593.83 L1148.69,598.96 L1164.03,604.23 L1179.81,609.66" stroke="#7a7a7a" stroke-width="0.9" fill="none"/><path d="M785.14,473.95 L778.58,476.29 L771.90,478.68 L765.09,481.11 L758.15,483.58 L751.08,486.11 L743.87,488.68 L736.51,491.30 L729.01,493.98 L721.36,496.71 L713.55,499.49 L705.59,502.34 L697.45,505.24 L689.15,508.20 L680.67,511.23 L672.01,514.32 L663.16,517.47 L654.11,520.70 L644.87,524.00 L635.42,527.37 L625.75,530.82 L615.87,534.35 L605.75,537.95 L595.40,541.65 L584.80,545.43 L573.95,549.30 L562.84,553.27 L551.45,557.33 L539.77,561.50 L527.81,565.77 L515.53,570.14 L502.94,574.64 L490.02,579.25 L476.76,583.98 L463.14,588.84 L449.15,593.83 L434.77,598.96 L419.99,604.23 L404.78,609.66 L389.14,615.24 L373.04,620.98" stroke="#7a7a7a" stroke-width="0.9" fill="none"/><path d="M758.66,473.95 L765.22,476.29 L771.90,478.68 L778.71,481.11 L785.65,483.58 L792.72,486.11 L799.93,488.68 L807.29,491.30 L814.79,493.98 L822.44,496.71 L830.25,499.49 L838.21,502.34 L846.35,505.24 L854.65,508.20 L863.13,511.23 L871.79,514.32 L880.64,517.47 L889.69,520.70 L898.93,524.00 L908.38,527.37 L918.05,530.82 L927.93,534.35 L938.05,537.95 L948.40,541.65 L959.00,545.43 L969.85,549.30 L980.96,553.27 L992.35,557.33 L1004.03,561.50 L1015.99,565.77 L1028.27,570.14 L1040.86,574.64 L1053.78,579.25 L1067.04,583.98 L1080.66,588.84 L1094.65,593.83 L1109.03,598.96 L1123.81,604.23 L1139.02,609.66 L1154.66,615.24 L1170.76,620.98" stroke="#7a7a7a" stroke-width="0.9" fill="none"/><path d="M798.88,478.68 L792.33,481.11 L785.65,483.58 L778.84,486.11 L771.90,488.68 L764.82,491.30 L757.60,493.98 L750.24,496.71 L742.73,499.49 L735.06,502.34 L727.23,505.24 L719.24,508.20 L711.08,511.23 L702.74,514.32 L694.23,517.47 L685.52,520.70 L676.63,524.00 L667.53,527.37 L658.23,530.82 L648.72,534.35 L638.98,537.95 L629.02,541.65 L618.82,545.43 L608.38,549.30 L597.68,553.27 L586.72,557.33 L575.48,561.50 L563.97,565.77 L552.16,570.14 L540.04,574.64 L527.61,579.25 L514.84,583.98 L501.73,588.84 L488.27,593.83 L474.43,598.96 L460.20,604.23 L445.57,609.66 L430.52,615.24 L415.03,620.98 L399.07,626.90 L382.64,632.99" stroke="#7a7a7a" stroke-width="0.9" fill="none"/><path d="M744.92,478.68 L751.47,481.11 L758.15,483.58 L764.96,486.11 L771.90,488.68 L778.98,491.30 L786.20,493.98 L793.56,496.71 L801.07,499.49 L808.74,502.34 L816.57,505.24 L824.56,508.20 L832.72,511.23 L841.06,514.32 L849.57,517.47 L858.28,520.70 L867.17,524.00 L876.27,527.37 L885.57,530.82 L895.08,534.35 L904.82,537.95 L914.78,541.65 L924.98,545.43 L935.42,549.30 L946.12,553.27 L957.08,557.33 L968.32,561.50 L979.83,565.77 L991.64,570.14 L1003.76,574.64 L1016.19,579.25 L1028.96,583.98 L1042.07,588.84 L1055.53,593.83 L1069.37,598.96 L1083.60,604.23 L1098.23,609.66 L1113.28,615.24 L1128.77,620.98 L1144.73,626.90 L1161.16,632.99" stroke="#7a7a7a" stroke-width="0.9" fill="none"/><path d="M813.14,483.58 L806.60,486.11 L799.93,488.68 L793.13,491.30 L786.20,493.98 L779.12,496.71 L771.90,499.49 L764.53,502.34 L757.01,505.24 L749.33,508.20 L741.49,511.23 L733.48,514.32 L725.30,517.47 L716.93,520.70 L708.38,524.00 L699.65,527.37 L690.71,530.82 L681.57,534.35 L672.21,537.95 L662.64,541.65 L652.84,545.43 L642.80,549.30 L632.52,553.27 L621.99,557.33 L611.20,561.50 L600.13,565.77 L588.78,570.14 L577.14,574.64 L565.19,579.25 L552.92,583.98 L540.33,588.84 L527.39,593.83 L514.09,598.96 L500.42,604.23 L486.37,609.66 L471.90,615.24 L457.01,620.98 L441.68,626.90 L425.89,632.99 L409.61,639.27 L392.83,645.74" stroke="#7a7a7a" stroke-width="0.9" fill="none"/><path d="M730.66,483.58 L737.20,486.11 L743.87,488.68 L750.67,491.30 L757.60,493.98 L764.68,496.71 L771.90,499.49 L779.27,502.34 L786.79,505.24 L794.47,508.20 L802.31,511.23 L810.32,514.32 L818.50,517.47 L826.87,520.70 L835.42,524.00 L844.15,527.37 L853.09,530.82 L862.23,534.35 L871.59,537.95 L881.16,541.65 L890.96,545.43 L901.00,549.30 L911.28,553.27 L921.81,557.33 L932.60,561.50 L943.67,565.77 L955.02,570.14 L966.66,574.64 L978.61,579.25 L990.88,583.98 L1003.47,588.84 L1016.41,593.83 L1029.71,598.96 L1043.38,604.23 L1057.43,609.66 L1071.90,615.24 L1086.79,620.98 L1102.12,626.90 L1117.91,632.99 L1134.19,639.27 L1150.97,645.74" stroke="#7a7a7a" stroke-width="0.9" fill="none"/><path d="M827.97,488.68 L821.44,491.30 L814.79,493.98 L808.00,496.71 L801.07,499.49 L794.00,502.34 L786.79,505.24 L779.42,508.20 L771.90,511.23 L764.22,514.32 L756.37,517.47 L748.34,520.70 L740.14,524.00 L731.76,527.37 L723.18,530.82 L714.41,534.35 L705.44,537.95 L696.26,541.65 L686.86,545.43 L677.23,549.30 L667.37,553.27 L657.26,557.33 L646.91,561.50 L636.29,565.77 L625.40,570.14 L614.24,574.64 L602.77,579.25 L591.01,583.98 L578.92,588.84 L566.51,593.83 L553.76,598.96 L540.64,604.23 L527.16,609.66 L513.28,615.24 L499.00,620.98 L484.29,626.90 L469.14,632.99 L453.53,639.27 L437.43,645.74 L420.82,652.42 L403.68,659.32" stroke="#7a7a7a" stroke-width="0.9" fill="none"/><path d="M715.83,488.68 L722.36,491.30 L729.01,493.98 L735.80,496.71 L742.73,499.49 L749.80,502.34 L757.01,505.24 L764.38,508.20 L771.90,511.23 L779.58,514.32 L787.43,517.47 L795.46,520.70 L803.66,524.00 L812.04,527.37 L820.62,530.82 L829.39,534.35 L838.36,537.95 L847.54,541.65 L856.94,545.43 L866.57,549.30 L876.43,553.27 L886.54,557.33 L896.89,561.50 L907.51,565.77 L918.40,570.14 L929.56,574.64 L941.03,579.25 L952.79,583.98 L964.88,588.84 L977.29,593.83 L990.04,598.96 L1003.16,604.23 L1016.64,609.66 L1030.52,615.24 L1044.80,620.98 L1059.51,626.90 L1074.66,632.99 L1090.27,639.27 L1106.37,645.74 L1122.98,652.42 L1140.12,659.32" stroke="#7a7a7a" stroke-width="0.9" fill="none"/><path d="M843.38,493.98 L836.88,496.71 L830.25,499.49 L823.48,502.34 L816.57,505.24 L809.51,508.20 L802.31,511.23 L794.95,514.32 L787.43,517.47 L779.75,520.70 L771.90,524.00 L763.87,527.37 L755.66,530.82 L747.26,534.35 L738.67,537.95 L729.88,541.65 L720.87,545.43 L711.65,549.30 L702.21,553.27 L692.54,557.33 L682.62,561.50 L672.45,565.77 L662.03,570.14 L651.33,574.64 L640.36,579.25 L629.09,583.98 L617.52,588.84 L605.63,593.83 L593.42,598.96 L580.86,604.23 L567.95,609.66 L554.66,615.24 L540.98,620.98 L526.90,626.90 L512.39,632.99 L497.44,639.27 L482.03,645.74 L466.12,652.42 L449.71,659.32 L432.76,666.43 L415.25,673.79" stroke="#7a7a7a" stroke-width="0.9" fill="none"/><path d="M700.42,493.98 L706.92,496.71 L713.55,499.49 L720.32,502.34 L727.23,505.24 L734.29,508.20 L741.49,511.23 L748.85,514.32 L756.37,517.47 L764.05,520.70 L771.90,524.00 L779.93,527.37 L788.14,530.82 L796.54,534.35 L805.13,537.95 L813.92,541.65 L822.93,545.43 L832.15,549.30 L841.59,553.27 L851.26,557.33 L861.18,561.50 L871.35,565.77 L881.77,570.14 L892.47,574.64 L903.44,579.25 L914.71,583.98 L926.28,588.84 L938.17,593.83 L950.38,598.96 L962.94,604.23 L975.85,609.66 L989.14,615.24 L1002.82,620.98 L1016.90,626.90 L1031.41,632.99 L1046.36,639.27 L1061.77,645.74 L1077.68,652.42 L1094.09,659.32 L1111.04,666.43 L1128.55,673.79" stroke="#7a7a7a" stroke-width="0.9" fill="none"/><path d="M859.42,499.49 L852.95,502.34 L846.35,505.24 L839.61,508.20 L832.72,511.23 L825.69,514.32 L818.50,517.47 L811.16,520.70 L803.66,524.00 L795.98,527.37 L788.14,530.82 L780.11,534.35 L771.90,537.95 L763.50,541.65 L754.89,545.43 L746.08,549.30 L737.06,553.27 L727.81,557.33 L718.33,561.50 L708.62,565.77 L698.65,570.14 L688.43,574.64 L677.94,579.25 L667.17,583.98 L656.11,588.84 L644.75,593.83 L633.08,598.96 L621.08,604.23 L608.74,609.66 L596.04,615.24 L582.97,620.98 L569.51,626.90 L555.64,632.99 L541.35,639.27 L526.62,645.74 L511.42,652.42 L495.74,659.32 L479.54,666.43 L462.80,673.79 L445.50,681.39 L427.61,689.26" stroke="#7a7a7a" stroke-width="0.9" fill="none"/><path d="M684.38,499.49 L690.85,502.34 L697.45,505.24 L704.19,508.20 L711.08,511.23 L718.11,514.32 L725.30,517.47 L732.64,520.70 L740.14,524.00 L747.82,527.37 L755.66,530.82 L763.69,534.35 L771.90,537.95 L780.30,541.65 L788.91,545.43 L797.72,549.30 L806.74,553.27 L815.99,557.33 L825.47,561.50 L835.18,565.77 L845.15,570.14 L855.37,574.64 L865.86,579.25 L876.63,583.98 L887.69,588.84 L899.05,593.83 L910.72,598.96 L922.72,604.23 L935.06,609.66 L947.76,615.24 L960.83,620.98 L974.29,626.90 L988.16,632.99 L1002.45,639.27 L1017.18,645.74 L1032.38,652.42 L1048.06,659.32 L1064.26,666.43 L1081.00,673.79 L1098.30,681.39 L1116.19,689.26" stroke="#7a7a7a" stroke-width="0.9" fill="none"/><path d="M876.13,505.24 L869.70,508.20 L863.13,511.23 L856.43,514.32 L849.57,517.47 L842.57,520.70 L835.42,524.00 L828.10,527.37 L820.62,530.82 L812.96,534.35 L805.13,537.95 L797.11,541.65 L788.91,545.43 L780.51,549.30 L771.90,553.27 L763.08,557.33 L754.04,561.50 L744.78,565.77 L735.28,570.14 L725.53,574.64 L715.52,579.25 L705.26,583.98 L694.71,588.84 L683.88,593.83 L672.74,598.96 L661.30,604.23 L649.53,609.66 L637.42,615.24 L624.95,620.98 L612.12,626.90 L598.90,632.99 L585.27,639.27 L571.22,645.74 L556.72,652.42 L541.76,659.32 L526.31,666.43 L510.35,673.79 L493.86,681.39 L476.79,689.26 L459.13,697.39 L440.85,705.82" stroke="#7a7a7a" stroke-width="0.9" fill="none"/><path d="M667.67,505.24 L674.10,508.20 L680.67,511.23 L687.37,514.32 L694.23,517.47 L701.23,520.70 L708.38,524.00 L715.70,527.37 L723.18,530.82 L730.84,534.35 L738.67,537.95 L746.69,541.65 L754.89,545.43 L763.29,549.30 L771.90,553.27 L780.72,557.33 L789.76,561.50 L799.02,565.77 L808.52,570.14 L818.27,574.64 L828.28,579.25 L838.54,583.98 L849.09,588.84 L859.92,593.83 L871.06,598.96 L882.50,604.23 L894.27,609.66 L906.38,615.24 L918.85,620.98 L931.68,626.90 L944.90,632.99 L958.53,639.27 L972.58,645.74 L987.08,652.42 L1002.04,659.32 L1017.49,666.43 L1033.45,673.79 L1049.94,681.39 L1067.01,689.26 L1084.67,697.39 L1102.95,705.82" stroke="#7a7a7a" stroke-width="0.9" fill="none"/><path d="M893.54,511.23 L887.16,514.32 L880.64,517.47 L873.98,520.70 L867.17,524.00 L860.21,527.37 L853.09,530.82 L845.81,534.35 L838.36,537.95 L830.73,541.65 L822.93,545.43 L814.93,549.30 L806.74,553.27 L798.35,557.33 L789.76,561.50 L780.94,565.77 L771.90,570.14 L762.63,574.64 L753.11,579.25 L743.34,583.98 L733.30,588.84 L723.00,593.83 L712.41,598.96 L701.52,604.23 L690.32,609.66 L678.80,615.24 L666.94,620.98 L654.73,626.90 L642.15,632.99 L629.18,639.27 L615.81,645.74 L602.02,652.42 L587.79,659.32 L573.09,666.43 L557.91,673.79 L542.21,681.39 L525.98,689.26 L509.18,697.39 L491.78,705.82 L473.75,714.55 L455.06,723.60" stroke="#7a7a7a" stroke-width="0.9" fill="none"/><path d="M650.26,511.23 L656.64,514.32 L663.16,517.47 L669.82,520.70 L676.63,524.00 L683.59,527.37 L690.71,530.82 L697.99,534.35 L705.44,537.95 L713.07,541.65 L720.87,545.43 L728.87,549.30 L737.06,553.27 L745.45,557.33 L754.04,561.50 L762.86,565.77 L771.90,570.14 L781.17,574.64 L790.69,579.25 L800.46,583.98 L810.50,588.84 L820.80,593.83 L831.39,598.96 L842.28,604.23 L853.48,609.66 L865.00,615.24 L876.86,620.98 L889.07,626.90 L901.65,632.99 L914.62,639.27 L927.99,645.74 L941.78,652.42 L956.01,659.32 L970.71,666.43 L985.89,673.79 L1001.59,681.39 L1017.82,689.26 L1034.62,697.39 L1052.02,705.82 L1070.05,714.55 L1088.74,723.60" stroke="#7a7a7a" stroke-width="0.9" fill="none"/><path d="M911.71,517.47 L905.39,520.70 L898.93,524.00 L892.32,527.37 L885.57,530.82 L878.66,534.35 L871.59,537.95 L864.35,541.65 L856.94,545.43 L849.36,549.30 L841.59,553.27 L833.63,557.33 L825.47,561.50 L817.10,565.77 L808.52,570.14 L799.72,574.64 L790.69,579.25 L781.42,583.98 L771.90,588.84 L762.12,593.83 L752.07,598.96 L741.74,604.23 L731.11,609.66 L720.18,615.24 L708.92,620.98 L697.33,626.90 L685.40,632.99 L673.09,639.27 L660.41,645.74 L647.32,652.42 L633.82,659.32 L619.87,666.43 L605.46,673.79 L590.57,681.39 L575.16,689.26 L559.22,697.39 L542.71,705.82 L525.60,714.55 L507.87,723.60 L489.46,733.00 L470.36,742.75" stroke="#7a7a7a" stroke-width="0.9" fill="none"/><path d="M632.09,517.47 L638.41,520.70 L644.87,524.00 L651.48,527.37 L658.23,530.82 L665.14,534.35 L672.21,537.95 L679.45,541.65 L686.86,545.43 L694.44,549.30 L702.21,553.27 L710.17,557.33 L718.33,561.50 L726.70,565.77 L735.28,570.14 L744.08,574.64 L753.11,579.25 L762.38,583.98 L771.90,588.84 L781.68,593.83 L791.73,598.96 L802.06,604.23 L812.69,609.66 L823.62,615.24 L834.88,620.98 L846.47,626.90 L858.40,632.99 L870.71,639.27 L883.39,645.74 L896.48,652.42 L909.98,659.32 L923.93,666.43 L938.34,673.79 L953.23,681.39 L968.64,689.26 L984.58,697.39 L1001.09,705.82 L1018.20,714.55 L1035.93,723.60 L1054.34,733.00 L1073.44,742.75" stroke="#7a7a7a" stroke-width="0.9" fill="none"/><path d="M930.69,524.00 L924.44,527.37 L918.05,530.82 L911.51,534.35 L904.82,537.95 L897.97,541.65 L890.96,545.43 L883.78,549.30 L876.43,553.27 L868.90,557.33 L861.18,561.50 L853.26,565.77 L845.15,570.14 L836.82,574.64 L828.28,579.25 L819.50,583.98 L810.50,588.84 L801.24,593.83 L791.73,598.96 L781.95,604.23 L771.90,609.66 L761.56,615.24 L750.91,620.98 L739.94,626.90 L728.65,632.99 L717.01,639.27 L705.01,645.74 L692.62,652.42 L679.85,659.32 L666.65,666.43 L653.02,673.79 L638.92,681.39 L624.35,689.26 L609.26,697.39 L593.64,705.82 L577.45,714.55 L560.67,723.60 L543.26,733.00 L525.18,742.75 L506.40,752.88 L486.87,763.41" stroke="#3e3e3e" stroke-width="0.9" fill="none"/><path d="M613.11,524.00 L619.36,527.37 L625.75,530.82 L632.29,534.35 L638.98,537.95 L645.83,541.65 L652.84,545.43 L660.02,549.30 L667.37,553.27 L674.90,557.33 L682.62,561.50 L690.54,565.77 L698.65,570.14 L706.98,574.64 L715.52,579.25 L724.30,583.98 L733.30,588.84 L742.56,593.83 L752.07,598.96 L761.85,604.23 L771.90,609.66 L782.24,615.24 L792.89,620.98 L803.86,626.90 L815.15,632.99 L826.79,639.27 L838.79,645.74 L851.18,652.42 L863.95,659.32 L877.15,666.43 L890.78,673.79 L904.88,681.39 L919.45,689.26 L934.54,697.39 L950.16,705.82 L966.35,714.55 L983.13,723.60 L1000.54,733.00 L1018.62,742.75 L1037.40,752.88 L1056.93,763.41" stroke="#3e3e3e" stroke-width="0.9" fill="none"/><path d="M950.52,530.82 L944.36,534.35 L938.05,537.95 L931.59,541.65 L924.98,545.43 L918.21,549.30 L911.28,553.27 L904.17,557.33 L896.89,561.50 L889.43,565.77 L881.77,570.14 L873.92,574.64 L865.86,579.25 L857.59,583.98 L849.09,588.84 L840.36,593.83 L831.39,598.96 L822.17,604.23 L812.69,609.66 L802.93,615.24 L792.89,620.98 L782.55,626.90 L771.90,632.99 L760.92,639.27 L749.60,645.74 L737.92,652.42 L725.87,659.32 L713.43,666.43 L700.57,673.79 L687.28,681.39 L673.53,689.26 L659.30,697.39 L644.57,705.82 L629.31,714.55 L613.48,723.60 L597.06,733.00 L580.01,742.75 L562.30,752.88 L543.88,763.41 L524.72,774.38 L504.76,785.79" stroke="#7a7a7a" stroke-width="0.9" fill="none"/><path d="M593.28,530.82 L599.44,534.35 L605.75,537.95 L612.21,541.65 L618.82,545.43 L625.59,549.30 L632.52,553.27 L639.63,557.33 L646.91,561.50 L654.37,565.77 L662.03,570.14 L669.88,574.64 L677.94,579.25 L686.21,583.98 L694.71,588.84 L703.44,593.83 L712.41,598.96 L721.63,604.23 L731.11,609.66 L740.87,615.24 L750.91,620.98 L761.25,626.90 L771.90,632.99 L782.88,639.27 L794.20,645.74 L805.88,652.42 L817.93,659.32 L830.37,666.43 L843.23,673.79 L856.52,681.39 L870.27,689.26 L884.50,697.39 L899.23,705.82 L914.49,714.55 L930.32,723.60 L946.74,733.00 L963.79,742.75 L981.50,752.88 L999.92,763.41 L1019.08,774.38 L1039.04,785.79" stroke="#7a7a7a" stroke-width="0.9" fill="none"/><path d="M971.28,537.95 L965.21,541.65 L959.00,545.43 L952.64,549.30 L946.12,553.27 L939.45,557.33 L932.60,561.50 L925.59,565.77 L918.40,570.14 L911.02,574.64 L903.44,579.25 L895.67,583.98 L887.69,588.84 L879.48,593.83 L871.06,598.96 L862.39,604.23 L853.48,609.66 L844.31,615.24 L834.88,620.98 L825.16,626.90 L815.15,632.99 L804.84,639.27 L794.20,645.74 L783.23,652.42 L771.90,659.32 L760.21,666.43 L748.12,673.79 L735.63,681.39 L722.72,689.26 L709.35,697.39 L695.50,705.82 L681.16,714.55 L666.29,723.60 L650.86,733.00 L634.84,742.75 L618.19,752.88 L600.88,763.41 L582.88,774.38 L564.12,785.79 L544.58,797.69 L524.19,810.10" stroke="#7a7a7a" stroke-width="0.9" fill="none"/><path d="M572.52,537.95 L578.59,541.65 L584.80,545.43 L591.16,549.30 L597.68,553.27 L604.35,557.33 L611.20,561.50 L618.21,565.77 L625.40,570.14 L632.78,574.64 L640.36,579.25 L648.13,583.98 L656.11,588.84 L664.32,593.83 L672.74,598.96 L681.41,604.23 L690.32,609.66 L699.49,615.24 L708.92,620.98 L718.64,626.90 L728.65,632.99 L738.96,639.27 L749.60,645.74 L760.57,652.42 L771.90,659.32 L783.59,666.43 L795.68,673.79 L808.17,681.39 L821.08,689.26 L834.45,697.39 L848.30,705.82 L862.64,714.55 L877.51,723.60 L892.94,733.00 L908.96,742.75 L925.61,752.88 L942.92,763.41 L960.92,774.38 L979.68,785.79 L999.22,797.69 L1019.61,810.10" stroke="#7a7a7a" stroke-width="0.9" fill="none"/><path d="M993.01,545.43 L987.06,549.30 L980.96,553.27 L974.72,557.33 L968.32,561.50 L961.75,565.77 L955.02,570.14 L948.11,574.64 L941.03,579.25 L933.75,583.98 L926.28,588.84 L918.61,593.83 L910.72,598.96 L902.61,604.23 L894.27,609.66 L885.69,615.24 L876.86,620.98 L867.77,626.90 L858.40,632.99 L848.75,639.27 L838.79,645.74 L828.53,652.42 L817.93,659.32 L806.98,666.43 L795.68,673.79 L783.99,681.39 L771.90,689.26 L759.39,697.39 L746.43,705.82 L733.01,714.55 L719.09,723.60 L704.65,733.00 L689.66,742.75 L674.09,752.88 L657.89,763.41 L641.04,774.38 L623.49,785.79 L605.20,797.69 L586.11,810.10 L566.19,823.06 L545.37,836.61" stroke="#7a7a7a" stroke-width="0.9" fill="none"/><path d="M550.79,545.43 L556.74,549.30 L562.84,553.27 L569.08,557.33 L575.48,561.50 L582.05,565.77 L588.78,570.14 L595.69,574.64 L602.77,579.25 L610.05,583.98 L617.52,588.84 L625.19,593.83 L633.08,598.96 L641.19,604.23 L649.53,609.66 L658.11,615.24 L666.94,620.98 L676.03,626.90 L685.40,632.99 L695.05,639.27 L705.01,645.74 L715.27,652.42 L725.87,659.32 L736.82,666.43 L748.12,673.79 L759.81,681.39 L771.90,689.26 L784.41,697.39 L797.37,705.82 L810.79,714.55 L824.71,723.60 L839.15,733.00 L854.14,742.75 L869.71,752.88 L885.91,763.41 L902.76,774.38 L920.31,785.79 L938.60,797.69 L957.69,810.10 L977.61,823.06 L998.43,836.61" stroke="#7a7a7a" stroke-width="0.9" fill="none"/><path d="M1015.81,553.27 L1009.99,557.33 L1004.03,561.50 L997.91,565.77 L991.64,570.14 L985.21,574.64 L978.61,579.25 L971.83,583.98 L964.88,588.84 L957.73,593.83 L950.38,598.96 L942.83,604.23 L935.06,609.66 L927.07,615.24 L918.85,620.98 L910.38,626.90 L901.65,632.99 L892.66,639.27 L883.39,645.74 L873.83,652.42 L863.95,659.32 L853.76,666.43 L843.23,673.79 L832.34,681.39 L821.08,689.26 L809.43,697.39 L797.37,705.82 L784.86,714.55 L771.90,723.60 L758.45,733.00 L744.49,742.75 L729.98,752.88 L714.89,763.41 L699.20,774.38 L682.85,785.79 L665.82,797.69 L648.04,810.10 L629.49,823.06 L610.09,836.61 L589.80,850.78 L568.55,865.61" stroke="#7a7a7a" stroke-width="0.9" fill="none"/><path d="M527.99,553.27 L533.81,557.33 L539.77,561.50 L545.89,565.77 L552.16,570.14 L558.59,574.64 L565.19,579.25 L571.97,583.98 L578.92,588.84 L586.07,593.83 L593.42,598.96 L600.97,604.23 L608.74,609.66 L616.73,615.24 L624.95,620.98 L633.42,626.90 L642.15,632.99 L651.14,639.27 L660.41,645.74 L669.97,652.42 L679.85,659.32 L690.04,666.43 L700.57,673.79 L711.46,681.39 L722.72,689.26 L734.37,697.39 L746.43,705.82 L758.94,714.55 L771.90,723.60 L785.35,733.00 L799.31,742.75 L813.82,752.88 L828.91,763.41 L844.60,774.38 L860.95,785.79 L877.98,797.69 L895.76,810.10 L914.31,823.06 L933.71,836.61 L954.00,850.78 L975.25,865.61" stroke="#7a7a7a" stroke-width="0.9" fill="none"/><path d="M1039.74,561.50 L1034.08,565.77 L1028.27,570.14 L1022.31,574.64 L1016.19,579.25 L1009.92,583.98 L1003.47,588.84 L996.85,593.83 L990.04,598.96 L983.05,604.23 L975.85,609.66 L968.45,615.24 L960.83,620.98 L952.99,626.90 L944.90,632.99 L936.58,639.27 L927.99,645.74 L919.13,652.42 L909.98,659.32 L900.54,666.43 L890.78,673.79 L880.70,681.39 L870.27,689.26 L859.47,697.39 L848.30,705.82 L836.72,714.55 L824.71,723.60 L812.25,733.00 L799.31,742.75 L785.87,752.88 L771.90,763.41 L757.36,774.38 L742.22,785.79 L726.44,797.69 L709.97,810.10 L692.78,823.06 L674.82,836.61 L656.02,850.78 L636.34,865.61 L615.70,881.17 L594.04,897.50" stroke="#7a7a7a" stroke-width="0.9" fill="none"/><path d="M504.06,561.50 L509.72,565.77 L515.53,570.14 L521.49,574.64 L527.61,579.25 L533.88,583.98 L540.33,588.84 L546.95,593.83 L553.76,598.96 L560.75,604.23 L567.95,609.66 L575.35,615.24 L582.97,620.98 L590.81,626.90 L598.90,632.99 L607.22,639.27 L615.81,645.74 L624.67,652.42 L633.82,659.32 L643.26,666.43 L653.02,673.79 L663.10,681.39 L673.53,689.26 L684.33,697.39 L695.50,705.82 L707.08,714.55 L719.09,723.60 L731.55,733.00 L744.49,742.75 L757.93,752.88 L771.90,763.41 L786.44,774.38 L801.58,785.79 L817.36,797.69 L833.83,810.10 L851.02,823.06 L868.98,836.61 L887.78,850.78 L907.46,865.61 L928.10,881.17 L949.76,897.50" stroke="#7a7a7a" stroke-width="0.9" fill="none"/><path d="M1064.89,570.14 L1059.41,574.64 L1053.78,579.25 L1048.00,583.98 L1042.07,588.84 L1035.97,593.83 L1029.71,598.96 L1023.27,604.23 L1016.64,609.66 L1009.83,615.24 L1002.82,620.98 L995.60,626.90 L988.16,632.99 L980.49,639.27 L972.58,645.74 L964.43,652.42 L956.01,659.32 L947.32,666.43 L938.34,673.79 L929.06,681.39 L919.45,689.26 L909.52,697.39 L899.23,705.82 L888.57,714.55 L877.51,723.60 L866.05,733.00 L854.14,742.75 L841.77,752.88 L828.91,763.41 L815.52,774.38 L801.58,785.79 L787.05,797.69 L771.90,810.10 L756.08,823.06 L739.54,836.61 L722.24,850.78 L704.12,865.61 L685.12,881.17 L665.18,897.50 L644.23,914.66 L622.18,932.72" stroke="#7a7a7a" stroke-width="0.9" fill="none"/><path d="M478.91,570.14 L484.39,574.64 L490.02,579.25 L495.80,583.98 L501.73,588.84 L507.83,593.83 L514.09,598.96 L520.53,604.23 L527.16,609.66 L533.97,615.24 L540.98,620.98 L548.20,626.90 L555.64,632.99 L563.31,639.27 L571.22,645.74 L579.37,652.42 L587.79,659.32 L596.48,666.43 L605.46,673.79 L614.74,681.39 L624.35,689.26 L634.28,697.39 L644.57,705.82 L655.23,714.55 L666.29,723.60 L677.75,733.00 L689.66,742.75 L702.03,752.88 L714.89,763.41 L728.28,774.38 L742.22,785.79 L756.75,797.69 L771.90,810.10 L787.72,823.06 L804.26,836.61 L821.56,850.78 L839.68,865.61 L858.68,881.17 L878.62,897.50 L899.57,914.66 L921.62,932.72" stroke="#7a7a7a" stroke-width="0.9" fill="none"/><path d="M1091.36,579.25 L1086.08,583.98 L1080.66,588.84 L1075.09,593.83 L1069.37,598.96 L1063.49,604.23 L1057.43,609.66 L1051.21,615.24 L1044.80,620.98 L1038.20,626.90 L1031.41,632.99 L1024.40,639.27 L1017.18,645.74 L1009.73,652.42 L1002.04,659.32 L994.10,666.43 L985.89,673.79 L977.41,681.39 L968.64,689.26 L959.56,697.39 L950.16,705.82 L940.42,714.55 L930.32,723.60 L919.84,733.00 L908.96,742.75 L897.66,752.88 L885.91,763.41 L873.68,774.38 L860.95,785.79 L847.67,797.69 L833.83,810.10 L819.37,823.06 L804.26,836.61 L788.45,850.78 L771.90,865.61 L754.54,881.17 L736.33,897.50 L717.18,914.66 L697.04,932.72 L675.82,951.74 L653.43,971.82" stroke="#7a7a7a" stroke-width="0.9" fill="none"/><path d="M452.44,579.25 L457.72,583.98 L463.14,588.84 L468.71,593.83 L474.43,598.96 L480.31,604.23 L486.37,609.66 L492.59,615.24 L499.00,620.98 L505.60,626.90 L512.39,632.99 L519.40,639.27 L526.62,645.74 L534.07,652.42 L541.76,659.32 L549.70,666.43 L557.91,673.79 L566.39,681.39 L575.16,689.26 L584.24,697.39 L593.64,705.82 L603.38,714.55 L613.48,723.60 L623.96,733.00 L634.84,742.75 L646.14,752.88 L657.89,763.41 L670.12,774.38 L682.85,785.79 L696.13,797.69 L709.97,810.10 L724.43,823.06 L739.54,836.61 L755.35,850.78 L771.90,865.61 L789.26,881.17 L807.47,897.50 L826.62,914.66 L846.76,932.72 L867.98,951.74 L890.37,971.82" stroke="#7a7a7a" stroke-width="0.9" fill="none"/><path d="M1119.26,588.84 L1114.21,593.83 L1109.03,598.96 L1103.70,604.23 L1098.23,609.66 L1092.59,615.24 L1086.79,620.98 L1080.81,626.90 L1074.66,632.99 L1068.32,639.27 L1061.77,645.74 L1055.03,652.42 L1048.06,659.32 L1040.87,666.43 L1033.45,673.79 L1025.77,681.39 L1017.82,689.26 L1009.60,697.39 L1001.09,705.82 L992.27,714.55 L983.13,723.60 L973.64,733.00 L963.79,742.75 L953.56,752.88 L942.92,763.41 L931.84,774.38 L920.31,785.79 L908.29,797.69 L895.76,810.10 L882.67,823.06 L868.98,836.61 L854.67,850.78 L839.68,865.61 L823.97,881.17 L807.47,897.50 L790.14,914.66 L771.90,932.72 L752.68,951.74 L732.41,971.82 L710.99,993.02 L688.31,1015.47" stroke="#7a7a7a" stroke-width="0.9" fill="none"/><path d="M424.54,588.84 L429.59,593.83 L434.77,598.96 L440.10,604.23 L445.57,609.66 L451.21,615.24 L457.01,620.98 L462.99,626.90 L469.14,632.99 L475.48,639.27 L482.03,645.74 L488.77,652.42 L495.74,659.32 L502.93,666.43 L510.35,673.79 L518.03,681.39 L525.98,689.26 L534.20,697.39 L542.71,705.82 L551.53,714.55 L560.67,723.60 L570.16,733.00 L580.01,742.75 L590.24,752.88 L600.88,763.41 L611.96,774.38 L623.49,785.79 L635.51,797.69 L648.04,810.10 L661.13,823.06 L674.82,836.61 L689.13,850.78 L704.12,865.61 L719.83,881.17 L736.33,897.50 L753.66,914.66 L771.90,932.72 L791.12,951.74 L811.39,971.82 L832.81,993.02 L855.49,1015.47" stroke="#7a7a7a" stroke-width="0.9" fill="none"/><path d="M1148.69,598.96 L1143.92,604.23 L1139.02,609.66 L1133.97,615.24 L1128.77,620.98 L1123.42,626.90 L1117.91,632.99 L1112.23,639.27 L1106.37,645.74 L1100.33,652.42 L1094.09,659.32 L1087.65,666.43 L1081.00,673.79 L1074.12,681.39 L1067.01,689.26 L1059.65,697.39 L1052.02,705.82 L1044.12,714.55 L1035.93,723.60 L1027.44,733.00 L1018.62,742.75 L1009.45,752.88 L999.92,763.41 L990.00,774.38 L979.68,785.79 L968.91,797.69 L957.69,810.10 L945.96,823.06 L933.71,836.61 L920.89,850.78 L907.46,865.61 L893.39,881.17 L878.62,897.50 L863.09,914.66 L846.76,932.72 L829.55,951.74 L811.39,971.82 L792.20,993.02 L771.90,1015.47 L750.38,1039.26 L727.52,1064.53" stroke="#7a7a7a" stroke-width="0.9" fill="none"/><path d="M395.11,598.96 L399.88,604.23 L404.78,609.66 L409.83,615.24 L415.03,620.98 L420.38,626.90 L425.89,632.99 L431.57,639.27 L437.43,645.74 L443.47,652.42 L449.71,659.32 L456.15,666.43 L462.80,673.79 L469.68,681.39 L476.79,689.26 L484.15,697.39 L491.78,705.82 L499.68,714.55 L507.87,723.60 L516.36,733.00 L525.18,742.75 L534.35,752.88 L543.88,763.41 L553.80,774.38 L564.12,785.79 L574.89,797.69 L586.11,810.10 L597.84,823.06 L610.09,836.61 L622.91,850.78 L636.34,865.61 L650.41,881.17 L665.18,897.50 L680.71,914.66 L697.04,932.72 L714.25,951.74 L732.41,971.82 L751.60,993.02 L771.90,1015.47 L793.42,1039.26 L816.28,1064.53" stroke="#7a7a7a" stroke-width="0.9" fill="none"/><path d="M1179.81,609.66 L1175.35,615.24 L1170.76,620.98 L1166.03,626.90 L1161.16,632.99 L1156.14,639.27 L1150.97,645.74 L1145.63,652.42 L1140.12,659.32 L1134.43,666.43 L1128.55,673.79 L1122.48,681.39 L1116.19,689.26 L1109.69,697.39 L1102.95,705.82 L1095.98,714.55 L1088.74,723.60 L1081.23,733.00 L1073.44,742.75 L1065.34,752.88 L1056.93,763.41 L1048.16,774.38 L1039.04,785.79 L1029.53,797.69 L1019.61,810.10 L1009.26,823.06 L998.43,836.61 L987.11,850.78 L975.25,865.61 L962.81,881.17 L949.76,897.50 L936.05,914.66 L921.62,932.72 L906.41,951.74 L890.37,971.82 L873.42,993.02 L855.49,1015.47 L836.47,1039.26 L816.28,1064.53 L794.80,1091.40 L771.90,1120.06" stroke="#7a7a7a" stroke-width="0.9" fill="none"/><path d="M363.99,609.66 L368.45,615.24 L373.04,620.98 L377.77,626.90 L382.64,632.99 L387.66,639.27 L392.83,645.74 L398.17,652.42 L403.68,659.32 L409.37,666.43 L415.25,673.79 L421.32,681.39 L427.61,689.26 L434.11,697.39 L440.85,705.82 L447.82,714.55 L455.06,723.60 L462.57,733.00 L470.36,742.75 L478.46,752.88 L486.87,763.41 L495.64,774.38 L504.76,785.79 L514.27,797.69 L524.19,810.10 L534.54,823.06 L545.37,836.61 L556.69,850.78 L568.55,865.61 L580.99,881.17 L594.04,897.50 L607.75,914.66 L622.18,932.72 L637.39,951.74 L653.43,971.82 L670.38,993.02 L688.31,1015.47 L707.33,1039.26 L727.52,1064.53 L749.00,1091.40 L771.90,1120.06" stroke="#7a7a7a" stroke-width="0.9" fill="none"/></svg>
<div style="position:absolute;left:539px;top:387px;width:14.3px;height:47.8px;background:#383838;border-radius:3px"></div>
<div style="position:absolute;left:539px;top:399.3px;width:14.3px;height:35.5px;background:#474747;border-radius:3px"></div>
<svg style="position:absolute;left:541.2px;top:388.8px" width="10" height="10" viewBox="0 0 10 10"><rect x="2" y="2.6" width="6" height="1.2" fill="#aaa"/><rect x="2" y="4.5" width="6" height="1.2" fill="#aaa"/><rect x="2" y="6.4" width="6" height="1.2" fill="#aaa"/></svg>
<svg style="position:absolute;left:541.2px;top:400.5px" width="10" height="10" viewBox="0 0 10 10"><rect x="2.2" y="2.2" width="5.6" height="5.6" rx="0.6" fill="none" stroke="#ddd" stroke-width="0.9"/><path d="M4,3.6 V7.8 M6,3.6 V7.8 M2.2,3.6 H7.8" stroke="#ddd" stroke-width="0.8"/></svg>
<svg style="position:absolute;left:541.2px;top:412.3px" width="10" height="10" viewBox="0 0 10 10"><path d="M2.2,4.6 Q3,2 5.4,2.2 Q8,2.6 7.8,5.4 Q7.5,7.8 5.2,7.8 Q4.4,7.6 4.8,6.6 Q5,5.4 3.8,5.6 Q2.6,5.8 2.2,4.6 Z" fill="none" stroke="#ddd" stroke-width="0.9"/></svg>
<svg style="position:absolute;left:541.2px;top:424px" width="10" height="10" viewBox="0 0 10 10"><rect x="2.2" y="2.2" width="5.6" height="5.6" rx="0.6" fill="none" stroke="#ddd" stroke-width="0.9"/><path d="M2.5,7.5 L4.5,5.3 L6,6.8 M5.6,5.6 H7.6" stroke="#ddd" stroke-width="0.8" fill="none"/></svg>
<div style="position:absolute;left:61px;top:136.4px;width:156px;height:98.6px;background:#665533;border-radius:4px;overflow:hidden"><div style="position:absolute;left:0;top:0;right:0;height:10.4px;background:#443322"></div><div style="position:absolute;left:3.8px;top:3.6px;width:3.2px;height:3.2px;border-radius:50%;background:#776655"></div><div style="position:absolute;left:10.2px;top:2.7px;font-size:4.9px;line-height:1;color:#998877">Markdown Note</div><div style="position:absolute;left:3.7px;top:14.7px;font-size:3.7px;line-height:1;color:#b9a0e8;border-bottom:0.4px solid rgba(185,160,232,.45);padding-bottom:0.2px">Tutorial</div><div style="position:absolute;left:3.7px;top:23.6px;font-size:5.15px;line-height:1;color:#f0f0f0;font-weight:bold">Model link</div><div style="position:absolute;left:3.7px;top:33.9px;font-size:3.5px;line-height:1;color:#eee;font-weight:bold">checkpoints</div><div style="position:absolute;left:13.2px;top:42px;width:1.3px;height:1.3px;border-radius:50%;background:#ddd"></div><div style="position:absolute;left:17px;top:41.8px;font-size:3.7px;line-height:1;color:#b9a0e8;border-bottom:0.4px solid rgba(185,160,232,.45);padding-bottom:0.2px">hunyuan3d-dit-v2-mv-turbo_fp16.safetensors</div><div style="position:absolute;left:3.7px;top:48.9px;font-size:3.4px;line-height:1;color:#eee;font-weight:bold">Model Storage Location</div><div style="position:absolute;left:5.5px;top:55.9px;width:145.5px;height:22px;border:0.5px dashed #7f7050;border-bottom:none;border-radius:2px"></div><div style="position:absolute;left:8px;top:59.9px;width:3.2px;height:2.4px;background:#f0c040;border-radius:0.4px"></div><div style="position:absolute;left:13px;top:59.5px;font-size:2.9px;line-height:1;color:#eee;font-family:'Liberation Mono',monospace;font-weight:bold">ComfyUI/</div><div style="position:absolute;left:8px;top:64.3px;font-size:2.9px;line-height:1;color:#bbb;font-family:'Liberation Mono',monospace;font-weight:bold">├──</div><div style="position:absolute;left:19.7px;top:64.7px;width:3.2px;height:2.4px;background:#f0c040;border-radius:0.4px"></div><div style="position:absolute;left:24.8px;top:64.3px;font-size:2.9px;line-height:1;color:#eee;font-family:'Liberation Mono',monospace;font-weight:bold">models/</div><div style="position:absolute;left:8px;top:68.1px;font-size:2.9px;line-height:1;color:#bbb;font-family:'Liberation Mono',monospace;font-weight:bold">│&nbsp;&nbsp;&nbsp;└──</div><div style="position:absolute;left:28.4px;top:68.5px;width:3.2px;height:2.4px;background:#f0c040;border-radius:0.4px"></div><div style="position:absolute;left:33.4px;top:68.1px;font-size:2.9px;line-height:1;color:#eee;font-family:'Liberation Mono',monospace;font-weight:bold">checkpoints/</div><div style="position:absolute;left:8px;top:72.1px;font-size:2.9px;line-height:1;color:#bbb;font-family:'Liberation Mono',monospace;font-weight:bold">│&nbsp;&nbsp;&nbsp;&nbsp;&nbsp;&nbsp;&nbsp;└──</div><div style="position:absolute;left:39.2px;top:72.1px;font-size:2.9px;line-height:1;color:#eee;font-family:'Liberation Mono',monospace;font-weight:bold">hunyuan3d-dit-v2-mv-turbo_fp16.safetensors</div></div>
<div style="position:absolute;left:49.5px;top:103.3px;width:291.5px;height:38.6px;background:#171717;border:1px solid #2a2a2a;border-radius:7px"></div>
<div style="position:absolute;left:63.2px;top:116.6px;font-size:13.3px;line-height:1;color:#e8e8e8;white-space:nowrap;-webkit-text-stroke:0.25px #e8e8e8">3d_hunyuan3d_multiview_to_model_turbo</div>
<svg style="position:absolute;left:321.5px;top:118.5px" width="9" height="6" viewBox="0 0 9 6"><path d="M1.8,1.6 L4.5,4.2 L7.2,1.6" stroke="#ddd" stroke-width="1.3" fill="none" stroke-linecap="round" stroke-linejoin="round"/></svg>
<div style="position:absolute;left:0;top:99.8px;width:47px;height:477px;background:#171717;border-right:1px solid #262626"></div>
<div style="position:absolute;left:10.9px;top:110.3px;width:24.4px;height:24.8px;background:#000;border-radius:6px"></div>
<svg style="position:absolute;left:10.3px;top:110.3px" width="25.3" height="25.5" viewBox="0 0 25.3 25.5"><path d="M12.3,7 L18.1,7 L17.1,10.1 L11.7,10.1 L10.8,15 L15.2,15 L14.3,19.1 L8.6,19.1 L8.8,16.6 L6.4,15.8 L7.4,10.6 L9.9,9.9 L11,7.9 Z" fill="#fff" stroke="#fff" stroke-width="0.4" stroke-linejoin="round"/></svg>
<svg style="position:absolute;left:15px;top:153.5px" width="16" height="16" viewBox="0 0 16 16"><path d="M2.4,9 V4 Q2.4,2.2 4.2,2.2 H12 Q13.8,2.2 13.8,4 V12.4 Q13.8,14.2 12,14.2 H8.2" stroke="#a8a8a8" stroke-width="1.1" fill="none" stroke-linecap="round" stroke-linejoin="round"/><circle cx="4.9" cy="5.1" r="0.75" fill="#a8a8a8"/><path d="M8.8,14 V12.4 Q8.8,9.8 11.3,9.8 Q13.8,9.8 13.8,12.2" stroke="#a8a8a8" stroke-width="1.1" fill="none" stroke-linecap="round" stroke-linejoin="round"/><path d="M4.6,8.4 Q5,10.7 7.3,11.1 Q5,11.5 4.6,13.8 Q4.2,11.5 1.9,11.1 Q4.2,10.7 4.6,8.4 Z" stroke="#a8a8a8" stroke-width="1.1" fill="none" stroke-linecap="round" stroke-linejoin="round"/></svg>
<svg style="position:absolute;left:15px;top:192px" width="16" height="16" viewBox="0 0 16 16"><path d="M0.6,8 H3" stroke="#a8a8a8" stroke-width="1.1" fill="none" stroke-linecap="round" stroke-linejoin="round"/><path d="M12.1,4.4 H6 Q3,4.4 3,8.3 Q3,12.2 6,12.2 H12.1" stroke="#a8a8a8" stroke-width="1.1" fill="none" stroke-linecap="round" stroke-linejoin="round"/><path d="M6.4,8 H15.2" stroke="#a8a8a8" stroke-width="1.1" fill="none" stroke-linecap="round" stroke-linejoin="round"/></svg>
<svg style="position:absolute;left:15px;top:231px" width="16" height="16" viewBox="0 0 16 16"><g transform="skewX(-10) translate(1.4,0)"><rect x="1.2" y="2.4" width="5" height="4.6" rx="1.5" stroke="#a8a8a8" stroke-width="1.1" fill="none" stroke-linecap="round" stroke-linejoin="round"/><rect x="1.2" y="9.2" width="5" height="4.6" rx="1.5" stroke="#a8a8a8" stroke-width="1.1" fill="none" stroke-linecap="round" stroke-linejoin="round"/><rect x="8" y="9.2" width="5" height="4.6" rx="1.5" stroke="#a8a8a8" stroke-width="1.1" fill="none" stroke-linecap="round" stroke-linejoin="round"/></g><path d="M11.6,1.6 Q12,4.4 14.8,4.8 Q12,5.2 11.6,8 Q11.2,5.2 8.4,4.8 Q11.2,4.4 11.6,1.6 Z" stroke="#a8a8a8" stroke-width="1.1" fill="none" stroke-linecap="round" stroke-linejoin="round"/></svg>
<svg style="position:absolute;left:15px;top:268.8px" width="16" height="16" viewBox="0 0 16 16"><g transform="skewX(-10) translate(1.4,0)"><rect x="1.4" y="2.2" width="4.8" height="4.6" rx="1.5" stroke="#a8a8a8" stroke-width="1.1" fill="none" stroke-linecap="round" stroke-linejoin="round"/><rect x="9.2" y="2.2" width="4.8" height="4.6" rx="1.5" stroke="#a8a8a8" stroke-width="1.1" fill="none" stroke-linecap="round" stroke-linejoin="round"/><rect x="9.2" y="9.6" width="4.8" height="4.6" rx="1.5" stroke="#a8a8a8" stroke-width="1.1" fill="none" stroke-linecap="round" stroke-linejoin="round"/><path d="M3.8,6.8 Q3.8,11.9 9.2,11.9" stroke="#a8a8a8" stroke-width="1.1" fill="none" stroke-linecap="round" stroke-linejoin="round"/></g></svg>
<svg style="position:absolute;left:15px;top:307px" width="16" height="16" viewBox="0 0 16 16"><g transform="skewX(-10) translate(1.4,0)"><rect x="1.4" y="2.4" width="13" height="4.6" rx="1.6" stroke="#a8a8a8" stroke-width="1.1" fill="none" stroke-linecap="round" stroke-linejoin="round"/><rect x="1.4" y="9" width="5.6" height="4.6" rx="1.6" stroke="#a8a8a8" stroke-width="1.1" fill="none" stroke-linecap="round" stroke-linejoin="round"/><rect x="8.8" y="9" width="5.6" height="4.6" rx="1.6" stroke="#a8a8a8" stroke-width="1.1" fill="none" stroke-linecap="round" stroke-linejoin="round"/></g></svg>
<svg style="position:absolute;left:15px;top:429.5px" width="16" height="16" viewBox="0 0 16 16"><circle cx="8" cy="8" r="6.2" stroke="#a8a8a8" stroke-width="1.1" fill="none" stroke-linecap="round" stroke-linejoin="round"/><path d="M6.1,6.3 Q6.1,4.4 8,4.4 Q9.9,4.4 9.9,6.1 Q9.9,7.4 8,8.2 V9.4" stroke="#a8a8a8" stroke-width="1.1" fill="none" stroke-linecap="round" stroke-linejoin="round"/><circle cx="8" cy="11.5" r="0.75" fill="#a8a8a8"/></svg>
<svg style="position:absolute;left:15px;top:469px" width="16" height="16" viewBox="0 0 16 16"><path d="M2.5,4.2 L6.5,7.6 L2.5,11" stroke="#a8a8a8" stroke-width="1.1" fill="none" stroke-linecap="round" stroke-linejoin="round"/><path d="M8.2,12 H13.8" stroke="#a8a8a8" stroke-width="1.1" fill="none" stroke-linecap="round" stroke-linejoin="round"/></svg>
<svg style="position:absolute;left:15px;top:507px" width="16" height="16" viewBox="0 0 16 16"><rect x="1.6" y="3.4" width="12.8" height="9.4" rx="1.4" stroke="#a8a8a8" stroke-width="1.1" fill="none" stroke-linecap="round" stroke-linejoin="round"/><path d="M4,6 H4.4 M6.4,6 H6.8 M8.8,6 H9.2 M11.2,6 H11.6 M4,8 H4.4 M6.4,8 H6.8 M8.8,8 H9.2 M11.2,8 H11.6 M5,10.4 H11" stroke="#a8a8a8" stroke-width="1.1" fill="none" stroke-linecap="round" stroke-linejoin="round"/></svg>
<svg style="position:absolute;left:15px;top:545px" width="16" height="16" viewBox="0 0 16 16"><path d="M8,2.2 L9.3,2.2 L9.7,3.9 L11,4.6 L12.6,3.9 L13.5,4.9 L12.9,6.5 L13.4,7.8 L15,8.3 V9.6 L13.4,10.1 L12.8,11.5 L13.5,13 L12.5,14 L10.9,13.3 L9.6,13.9 L9.2,15.5 H7.9 L7.4,13.9 L6.1,13.3 L4.5,14 L3.5,13 L4.2,11.4 L3.6,10.1 L2,9.6 V8.3 L3.6,7.8 L4.2,6.5 L3.5,4.9 L4.5,3.9 L6.1,4.6 L7.4,3.9 Z" transform="translate(-0.5,-0.9)" stroke="#a8a8a8" stroke-width="1.1" fill="none" stroke-linecap="round" stroke-linejoin="round"/><circle cx="8" cy="8" r="2.2" stroke="#a8a8a8" stroke-width="1.1" fill="none" stroke-linecap="round" stroke-linejoin="round"/></svg>
<div style="position:absolute;left:51.2px;top:516.3px;font-size:8.2px;line-height:1;color:#c0c0c0;white-space:nowrap;">T: 0.00s</div>
<div style="position:absolute;left:51.2px;top:526.8px;font-size:8.2px;line-height:1;color:#c0c0c0;white-space:nowrap;">I: 0</div>
<div style="position:absolute;left:51.2px;top:537.3px;font-size:8.2px;line-height:1;color:#c0c0c0;white-space:nowrap;">N: 18 [18]</div>
<div style="position:absolute;left:51.2px;top:547.8px;font-size:8.2px;line-height:1;color:#c0c0c0;white-space:nowrap;">V: 46</div>
<div style="position:absolute;left:51.2px;top:558.3px;font-size:8.2px;line-height:1;color:#c0c0c0;white-space:nowrap;">FPS:59.88</div>
<div style="position:absolute;left:0;top:69.8px;width:1024px;height:30px;background:#151515;border-bottom:1px solid #262626"></div>
<svg style="position:absolute;left:9px;top:78px" width="12" height="14" viewBox="0 0 12 14"><path d="M8.5,1.8 L3.5,7 L8.5,12.2" stroke="#bbb" stroke-width="1.5" fill="none" stroke-linecap="round" stroke-linejoin="round"/></svg>
<div style="position:absolute;left:85.0px;top:69.8px;width:1px;height:29.5px;background:#262626"></div>
<div style="position:absolute;left:163.9px;top:69.8px;width:1px;height:29.5px;background:#262626"></div>
<div style="position:absolute;left:236.3px;top:69.8px;width:1px;height:29.5px;background:#262626"></div>
<div style="position:absolute;left:327.0px;top:69.8px;width:1px;height:29.5px;background:#262626"></div>
<div style="position:absolute;left:398.7px;top:69.8px;width:1px;height:29.5px;background:#262626"></div>
<div style="position:absolute;left:471.0px;top:69.8px;width:1px;height:29.5px;background:#262626"></div>
<div style="position:absolute;left:775.5px;top:69.8px;width:1px;height:29.5px;background:#262626"></div>
<div style="position:absolute;left:927.1px;top:69.8px;width:1px;height:29.5px;background:#262626"></div>
<div style="position:absolute;left:31px;top:80.4px;font-size:11.3px;line-height:1;color:#9a9a9a;white-space:nowrap;-webkit-text-stroke:0.25px #9a9a9a">est1</div>
<div style="position:absolute;left:93px;top:80.4px;font-size:11.3px;line-height:1;color:#9a9a9a;white-space:nowrap;-webkit-text-stroke:0.25px #9a9a9a">3dmodel</div>
<div style="position:absolute;left:178px;top:80.4px;font-size:11.3px;line-height:1;color:#9a9a9a;white-space:nowrap;-webkit-text-stroke:0.25px #9a9a9a">test2</div>
<div style="position:absolute;left:243.5px;top:80.4px;font-size:11.3px;line-height:1;color:#9a9a9a;white-space:nowrap;-webkit-text-stroke:0.25px #9a9a9a">3dmodel_2</div>
<div style="position:absolute;left:339px;top:80.4px;font-size:11.3px;line-height:1;color:#9a9a9a;white-space:nowrap;-webkit-text-stroke:0.25px #9a9a9a">rodin1</div>
<div style="position:absolute;left:414px;top:80.4px;font-size:11.3px;line-height:1;color:#9a9a9a;white-space:nowrap;-webkit-text-stroke:0.25px #9a9a9a">tripo</div>
<div style="position:absolute;left:479px;top:80.4px;font-size:11.3px;line-height:1;color:#9a9a9a;white-space:nowrap;-webkit-text-stroke:0.25px #9a9a9a">04_hunyuan_3d_2.1_...</div>
<div style="position:absolute;left:782.5px;top:80.4px;font-size:11.3px;line-height:1;color:#9a9a9a;white-space:nowrap;-webkit-text-stroke:0.25px #9a9a9a">audio_ace_step_1_t2...</div>
<div style="position:absolute;left:608.5px;top:82.6px;width:5px;height:5px;border-radius:50%;background:#8a8a8a"></div>
<div style="position:absolute;left:623.5px;top:69.8px;width:152px;height:30px;background:#171717;border-bottom:1px solid #5c8ed8"></div>
<div style="position:absolute;left:631px;top:80.4px;font-size:11.3px;line-height:1;color:#f2f2f2;white-space:nowrap;font-weight:bold">3d_hunyuan3d_mult...</div>
<div style="position:absolute;left:760.6px;top:82.8px;width:5.4px;height:5.4px;border-radius:50%;background:#fff"></div>
<svg style="position:absolute;left:937px;top:78px" width="12" height="14" viewBox="0 0 12 14"><path d="M3.5,1.8 L8.5,7 L3.5,12.2" stroke="#bbb" stroke-width="1.5" fill="none" stroke-linecap="round" stroke-linejoin="round"/></svg>
<div style="position:absolute;left:969.4999999999999px;top:83.6px;width:2.4px;height:2.4px;border-radius:50%;background:#ccc"></div>
<div style="position:absolute;left:974.0999999999999px;top:83.6px;width:2.4px;height:2.4px;border-radius:50%;background:#ccc"></div>
<div style="position:absolute;left:978.6999999999999px;top:83.6px;width:2.4px;height:2.4px;border-radius:50%;background:#ccc"></div>
<svg style="position:absolute;left:1001px;top:78px" width="14" height="14" viewBox="0 0 14 14"><path d="M7,1.5 V12.5 M1.5,7 H12.5" stroke="#ccc" stroke-width="1.5" stroke-linecap="round"/></svg>
<div style="position:absolute;left:732.2px;top:103.3px;width:288.6px;height:38.7px;background:#171717;border:1px solid #2a2a2a;border-radius:7px"></div>
<div style="position:absolute;left:741.6px;top:120.0px;width:1.6px;height:1.6px;border-radius:50%;background:#9a9a9a"></div>
<div style="position:absolute;left:744.8000000000001px;top:120.0px;width:1.6px;height:1.6px;border-radius:50%;background:#9a9a9a"></div>
<div style="position:absolute;left:741.6px;top:123.4px;width:1.6px;height:1.6px;border-radius:50%;background:#9a9a9a"></div>
<div style="position:absolute;left:744.8000000000001px;top:123.4px;width:1.6px;height:1.6px;border-radius:50%;background:#9a9a9a"></div>
<div style="position:absolute;left:741.6px;top:126.8px;width:1.6px;height:1.6px;border-radius:50%;background:#9a9a9a"></div>
<div style="position:absolute;left:744.8000000000001px;top:126.8px;width:1.6px;height:1.6px;border-radius:50%;background:#9a9a9a"></div>
<div style="position:absolute;left:753.3px;top:108.3px;width:113.7px;height:29.4px;background:#60a5fa;border-radius:5px 0 0 5px"></div>
<svg style="position:absolute;left:761px;top:114.3px" width="16" height="16" viewBox="0 0 16 16"><path d="M4.4,3.8 Q4.4,2.9 5.2,3.3 L12.4,7.4 Q13,7.9 12.4,8.4 L5.2,12.5 Q4.4,12.9 4.4,12 Z" stroke="#0b1a2e" stroke-width="1.3" fill="none" stroke-linejoin="round"/></svg>
<svg style="position:absolute;left:782.2px;top:117.8px" width="44" height="11" viewBox="0 0 44 10.6"><path transform="translate(0.0,0)" d="M5,0.2 V1.6 M1,3.4 V1.8 H9 V3.4 M2.6,3.6 H7.4 M2.8,5 H7.2 M0.9,6.6 H9.1 M5,1.8 V6.6 M5,6.6 Q4,9.2 0.7,10.2 M5.3,7.2 Q6.6,9.3 9.5,10.2" stroke="#0b1a2e" stroke-width="1.15" fill="none" stroke-linecap="round" stroke-linejoin="round"/><path transform="translate(11.15,0)" d="M3.1,0.4 L0.5,3 M3.3,3.2 L0.3,6.6 M2,5.2 V10.4 M4.8,1.3 H9.3 M4.3,4.4 H9.8 M7.8,4.4 V9.4 Q7.8,10.2 6.6,10" stroke="#0b1a2e" stroke-width="1.15" fill="none" stroke-linecap="round" stroke-linejoin="round"/><path transform="translate(22.3,0)" d="M0.7,2.8 H9.5 M5.7,0.3 V6.4 Q5.8,4.3 4.2,4.3 Q3,4.3 3,5.7 Q3,7.1 4.4,7.1 Q5.7,7.1 5.7,6 Q5.8,8.6 3.6,10.2" stroke="#0b1a2e" stroke-width="1.15" fill="none" stroke-linecap="round" stroke-linejoin="round"/><path transform="translate(33.45,0)" d="M2.2,1.2 H7.4 L2,6.6 Q5.2,4.4 7.8,5.8 Q9.4,7 8.4,8.8 Q7,10.4 4.8,9.8 Q3.4,9.2 4,8.4 Q5.2,7.6 6.4,8.6 Q6.9,9.2 6.9,10" stroke="#0b1a2e" stroke-width="1.15" fill="none" stroke-linecap="round" stroke-linejoin="round"/></svg>
<svg style="position:absolute;left:843px;top:117.5px" width="14" height="10" viewBox="0 0 14 10"><path d="M2,2.5 L7,7.2 L12,2.5" stroke="#0b1a2e" stroke-width="1.5" fill="none" stroke-linecap="round" stroke-linejoin="round"/></svg>
<div style="position:absolute;left:867px;top:108.3px;width:44.5px;height:29.4px;background:#0a0a0a;border:1px solid #2e2e2e;border-left:none;border-radius:0 5px 5px 0"></div>
<div style="position:absolute;left:876.2px;top:116.6px;font-size:13px;line-height:1;color:#f0f0f0;white-space:nowrap;">1</div>
<svg style="position:absolute;left:895px;top:110px" width="12" height="26" viewBox="0 0 12 26"><path d="M2.5,6.5 L6,3 L9.5,6.5" stroke="#aaa" stroke-width="1.2" fill="none" stroke-linecap="round"/><path d="M2.5,19.5 L6,23 L9.5,19.5" stroke="#aaa" stroke-width="1.2" fill="none" stroke-linecap="round"/></svg>
<div style="position:absolute;left:918px;top:109.8px;width:25.4px;height:25.6px;background:#6a2e2e;border-radius:5px"></div>
<svg style="position:absolute;left:924.7px;top:116.6px" width="12" height="12" viewBox="0 0 12 12"><path d="M2.5,2.5 L9.5,9.5 M9.5,2.5 L2.5,9.5" stroke="#cc9a9a" stroke-width="1.3" stroke-linecap="round"/></svg>
<div style="position:absolute;left:950px;top:109.8px;width:25.4px;height:25.6px;background:#262626;border-radius:5px"></div>
<svg style="position:absolute;left:955.2px;top:114.6px" width="15" height="15" viewBox="0 0 16 16"><path d="M2.8,8 A5.2,5.2 0 1 0 4.3,4.3" stroke="#eee" stroke-width="1.5" fill="none" stroke-linecap="round"/><path d="M2.6,2.6 V5.2 H5.2" stroke="#eee" stroke-width="1.5" fill="none" stroke-linecap="round" stroke-linejoin="round"/><path d="M8,5.4 V8.2 L9.8,9.6" stroke="#eee" stroke-width="1.5" fill="none" stroke-linecap="round"/></svg>
<div style="position:absolute;left:981.8px;top:109.8px;width:25.4px;height:25.6px;background:#262626;border-radius:5px"></div>
<svg style="position:absolute;left:987px;top:115px" width="15" height="15" viewBox="0 0 15 15"><rect x="2.6" y="2.6" width="10" height="9.8" rx="1.8" stroke="#eee" stroke-width="1.2" fill="none"/><path d="M9.2,2.6 V12.4" stroke="#eee" stroke-width="1.2"/></svg>
<div style="position:absolute;left:819px;top:370.4px;width:201.2px;height:158.8px;background:#1b1b1b;border:1px solid #262626;border-radius:7px;overflow:hidden"></div>
<div style="position:absolute;left:819px;top:380.75px;width:192.6px;height:95.9px;background:#4a4a4a"></div>
<div style="position:absolute;left:829.3px;top:394.9px;width:29.5px;height:16.80000000000001px;background:#4592cc"></div>
<div style="position:absolute;left:860.3px;top:393.1px;width:25.0px;height:11.299999999999955px;background:#4a7ca2"></div>
<div style="position:absolute;left:860.3px;top:397.5px;width:25.0px;height:6.899999999999977px;background:#4592cc"></div>
<div style="position:absolute;left:890.4px;top:397.6px;width:20.600000000000023px;height:4.399999999999977px;background:#4592cc"></div>
<div style="position:absolute;left:937.6px;top:400.8px;width:20.0px;height:5.599999999999966px;background:#4592cc"></div>
<div style="position:absolute;left:860.3px;top:406.4px;width:56.60000000000002px;height:70.20000000000005px;background:#4a7ca2"></div>
<div style="position:absolute;left:860.3px;top:476.6px;width:56.60000000000002px;height:4.399999999999977px;background:#24496a"></div>
<div style="position:absolute;left:870.5px;top:412.6px;width:16.5px;height:5.2999999999999545px;background:#4592cc"></div>
<div style="position:absolute;left:893.3px;top:410.3px;width:17.100000000000023px;height:5.300000000000011px;background:#4592cc"></div>
<div style="position:absolute;left:860.9px;top:420px;width:26.5px;height:22.69999999999999px;background:#4592cc"></div>
<div style="position:absolute;left:889.8px;top:420px;width:26.5px;height:22.69999999999999px;background:#4592cc"></div>
<div style="position:absolute;left:870.5px;top:449.5px;width:16.5px;height:4.699999999999989px;background:#7d4a80"></div>
<div style="position:absolute;left:898.9px;top:449.5px;width:16.5px;height:4.699999999999989px;background:#7d4a80"></div>
<div style="position:absolute;left:861.7px;top:457.5px;width:25.699999999999932px;height:19.100000000000023px;background:#7d4a80"></div>
<div style="position:absolute;left:861.7px;top:476.6px;width:25.699999999999932px;height:3.0px;background:#4a2a55"></div>
<div style="position:absolute;left:918.7px;top:410.3px;width:18.899999999999977px;height:4.399999999999977px;background:#4592cc"></div>
<div style="position:absolute;left:918.7px;top:417.9px;width:18.899999999999977px;height:4.100000000000023px;background:#4592cc"></div>
<div style="position:absolute;left:918.7px;top:425px;width:18.899999999999977px;height:5px;background:#4592cc"></div>
<div style="position:absolute;left:937.9px;top:410.3px;width:19.700000000000045px;height:16.19999999999999px;background:#4592cc"></div>
<div style="position:absolute;left:959.1px;top:410.3px;width:20.699999999999932px;height:6.5px;background:#4592cc"></div>
<div style="position:absolute;left:959.7px;top:419.1px;width:18.0px;height:5.2999999999999545px;background:#4592cc"></div>
<div style="position:absolute;left:918.7px;top:433.3px;width:91.5px;height:43.30000000000001px;background:#3f80b5"></div>
<div style="position:absolute;left:918.7px;top:476.6px;width:91.5px;height:28.099999999999966px;background:#0e5c98"></div>
<svg style="position:absolute;left:0;top:0" width="1024" height="576"><path d="M885.3,399.5 L1020,400" stroke="rgba(150,150,150,.55)" stroke-width="0.7"/><path d="M885.3,399.5 L870.5,414" stroke="rgba(150,150,150,.55)" stroke-width="0.7"/><path d="M885.3,399.5 L893.3,413" stroke="rgba(150,150,150,.55)" stroke-width="0.7"/><path d="M885.3,399.5 L900,480" stroke="rgba(150,150,150,.55)" stroke-width="0.7"/><path d="M887,415 L918.7,412" stroke="rgba(150,150,150,.55)" stroke-width="0.7"/><path d="M910.4,413 L918.7,412" stroke="rgba(150,150,150,.55)" stroke-width="0.7"/><path d="M885.3,399.5 L937.6,430" stroke="rgba(150,150,150,.55)" stroke-width="0.7"/><path d="M957.6,412 L977,420" stroke="rgba(150,150,150,.55)" stroke-width="0.7"/><path d="M979.8,414 L918.7,435" stroke="rgba(150,150,150,.55)" stroke-width="0.7"/><path d="M885.3,397 L957,415" stroke="rgba(150,150,150,.55)" stroke-width="0.7"/><path d="M911,400 L957.6,413" stroke="rgba(150,150,150,.55)" stroke-width="0.7"/></svg>
<div style="position:absolute;left:819px;top:380.75px;width:192.6px;height:95.9px;border:1.7px solid #f4f4f4;border-left:none"></div>
<svg style="position:absolute;left:828px;top:379px" width="16" height="13" viewBox="0 0 16 13"><circle cx="7.3" cy="4.2" r="1.5" stroke="#bbb" stroke-width="0.9" fill="none"/><circle cx="13" cy="9.6" r="1.5" stroke="#bbb" stroke-width="0.9" fill="none"/><path d="M8.8,4.2 H14 M6,9.6 H11.5" stroke="#bbb" stroke-width="0.9"/></svg>
<svg style="position:absolute;left:994.4px;top:379.8px" width="12" height="12" viewBox="0 0 12 12"><path d="M2.4,2.4 L9.6,9.6 M9.6,2.4 L2.4,9.6" stroke="#c8c8c8" stroke-width="0.9"/></svg>
<div style="position:absolute;left:819px;top:534.1px;width:200.7px;height:38.2px;background:#171717;border:1px solid #262626;border-radius:7px"></div>
<div style="position:absolute;left:825.1px;top:540.6px;width:25.4px;height:25.6px;background:#333;border-radius:5px"></div>
<svg style="position:absolute;left:830px;top:545.5px" width="16" height="16" viewBox="0 0 16 16"><path d="M2.8,3 L13.2,6.8 L8.6,8.4 L6.8,13 Z" stroke="#ddd" stroke-width="1.2" fill="none" stroke-linejoin="round"/></svg>
<svg style="position:absolute;left:855.3px;top:549.5px" width="10" height="8" viewBox="0 0 10 8"><path d="M2,2.2 L5,5.2 L8,2.2" stroke="#ccc" stroke-width="1.2" fill="none" stroke-linecap="round" stroke-linejoin="round"/></svg>
<svg style="position:absolute;left:935.9px;top:549.5px" width="10" height="8" viewBox="0 0 10 8"><path d="M2,2.2 L5,5.2 L8,2.2" stroke="#ccc" stroke-width="1.2" fill="none" stroke-linecap="round" stroke-linejoin="round"/></svg>
<div style="position:absolute;left:871.6px;top:543.6px;width:0.8px;height:20.4px;background:#333"></div>
<div style="position:absolute;left:955.8px;top:543.6px;width:0.8px;height:20.4px;background:#333"></div>
<svg style="position:absolute;left:881px;top:546px" width="15" height="15" viewBox="0 0 15 15"><path d="M2,5 V3.2 Q2,2 3.2,2 H5 M10,2 H11.8 Q13,2 13,3.2 V5 M13,10 V11.8 Q13,13 11.8,13 H10 M5,13 H3.2 Q2,13 2,11.8 V10" stroke="#ccc" stroke-width="1.2" fill="none" stroke-linecap="round"/><circle cx="7.5" cy="7.5" r="1.9" stroke="#ccc" stroke-width="1.2" fill="none"/></svg>
<div style="position:absolute;left:909.4px;top:548.6px;font-size:10.7px;line-height:1;color:#dcdcdc;white-space:nowrap;">42%</div>
<div style="position:absolute;left:959.8px;top:540.6px;width:25.4px;height:25.6px;background:#333;border-radius:5px"></div>
<svg style="position:absolute;left:965px;top:546px" width="15" height="15" viewBox="0 0 15 15"><path d="M2,3.5 L5.2,2.2 L9.8,3.5 L13,2.2 V11.5 L9.8,12.8 L5.2,11.5 L2,12.8 Z M5.2,2.2 V11.5 M9.8,3.5 V12.8" stroke="#ddd" stroke-width="1.2" fill="none" stroke-linejoin="round"/></svg>
<svg style="position:absolute;left:993px;top:546px" width="16" height="15" viewBox="0 0 16 15"><circle cx="4" cy="11" r="1.8" stroke="#ccc" stroke-width="1.1" fill="none"/><circle cx="12" cy="4" r="1.8" stroke="#ccc" stroke-width="1.1" fill="none"/><path d="M5.8,11 H9 Q11,11 11,9 V6 M10.2,4 H7 Q5,4 5,6 V9" stroke="#ccc" stroke-width="1.1" fill="none"/><path d="M2,2 L14,13" stroke="#ccc" stroke-width="1.1"/></svg>
<div style="position:absolute;left:0;top:0;width:1024px;height:42px;background:#84ace8"></div>
<div style="position:absolute;left:486.2px;top:-1px;width:46px;height:7.6px;border:1px solid #5b6f92;opacity:.8"></div>
<div style="position:absolute;left:0;top:32px;width:1024px;height:37.8px;background:#cddff7;border-radius:8px 8px 0 0"></div>
<div style="position:absolute;left:32px;top:5px;width:185.5px;height:28px;background:#cddff7;border-radius:8px 8px 0 0"></div>
<svg style="position:absolute;left:24px;top:24px" width="202" height="9" viewBox="0 0 202 9"><path d="M0,8 Q8,8 8,0 V9 H0 Z" fill="#cddff7"/><path d="M193.5,0 Q193.5,8 201.5,8 V9 H193.5 Z" fill="#cddff7"/></svg>
<div style="position:absolute;left:5px;top:5px;width:22px;height:22px;background:#c7d9f4;border-radius:7px"></div>
<svg style="position:absolute;left:10px;top:10px" width="12" height="12" viewBox="0 0 12 12"><path d="M3.2,4.6 L6,7.4 L8.8,4.6" stroke="#222" stroke-width="1.5" fill="none" stroke-linecap="round" stroke-linejoin="round"/></svg>
<div style="position:absolute;left:38.3px;top:9.5px;width:12.8px;height:12.8px;background:#1a2ad0"></div>
<svg style="position:absolute;left:38.3px;top:9.5px" width="12.8" height="12.8" viewBox="0 0 12.8 12.8"><path d="M6.62,1.60 L11.26,1.60 L10.46,4.08 L6.14,4.08 L5.42,8.00 L8.94,8.00 L8.22,11.28 L3.66,11.28 L3.82,9.28 L1.90,8.64 L2.70,4.48 L4.70,3.92 L5.58,2.32 Z" fill="#f4f040" stroke="#f4f040" stroke-width="0.3"/></svg>
<div style="position:absolute;left:57px;top:9.4px;width:134px;height:14px;overflow:hidden;white-space:nowrap;font-size:9.6px;line-height:14px;color:#3c3c3c;-webkit-mask-image:linear-gradient(90deg,#000 86%,transparent 100%)">*3d_hunyuan3d_multiview_to_model_turbo</div>
<svg style="position:absolute;left:199px;top:10px" width="12" height="12" viewBox="0 0 12 12"><path d="M2.8,2.8 L9.2,9.2 M9.2,2.8 L2.8,9.2" stroke="#222" stroke-width="1.5" stroke-linecap="round"/></svg>
<svg style="position:absolute;left:226.5px;top:9.5px" width="13" height="13" viewBox="0 0 13 13"><path d="M6.5,1.8 V11.2 M1.8,6.5 H11.2" stroke="#222" stroke-width="1.5" stroke-linecap="round"/></svg>
<svg style="position:absolute;left:925px;top:9px" width="14" height="14" viewBox="0 0 14 14"><path d="M2.5,7 H11.5" stroke="#222" stroke-width="1.3"/></svg>
<svg style="position:absolute;left:962px;top:9px" width="14" height="14" viewBox="0 0 14 14"><rect x="2.8" y="4.2" width="7" height="7" rx="1.4" stroke="#222" stroke-width="1.3" fill="none"/><path d="M5,2.6 H9.6 Q11.4,2.6 11.4,4.4 V9" stroke="#222" stroke-width="1.3" fill="none"/></svg>
<svg style="position:absolute;left:998px;top:9px" width="14" height="14" viewBox="0 0 14 14"><path d="M2.6,2.6 L11.4,11.4 M11.4,2.6 L2.6,11.4" stroke="#222" stroke-width="1.3"/></svg>
<svg style="position:absolute;left:10px;top:42px" width="16" height="16" viewBox="0 0 16 16"><path d="M13.2,8 H3.2 M7.6,3.4 L3,8 L7.6,12.6" stroke="#222" stroke-width="1.5" fill="none" stroke-linecap="round" stroke-linejoin="round"/></svg>
<svg style="position:absolute;left:38.5px;top:42px" width="16" height="16" viewBox="0 0 16 16"><path d="M2.8,8 H12.8 M8.4,3.4 L13,8 L8.4,12.6" stroke="#8d96a4" stroke-width="1.3" fill="none" stroke-linecap="round" stroke-linejoin="round"/></svg>
<svg style="position:absolute;left:67px;top:42px" width="16" height="16" viewBox="0 0 16 16"><path d="M12.6,7.8 A4.7,4.7 0 1 1 11.2,4.4" stroke="#222" stroke-width="1.5" fill="none" stroke-linecap="round"/><path d="M12.4,2.4 V5.6 H9.2" stroke="#222" stroke-width="1.5" fill="none" stroke-linecap="round" stroke-linejoin="round"/></svg>
<div style="position:absolute;left:97px;top:37px;width:816.7px;height:27.2px;background:#f2f6fc;border-radius:14px"></div>
<div style="position:absolute;left:100px;top:41.3px;width:19px;height:19px;background:#d3e1f5;border-radius:50%"></div>
<svg style="position:absolute;left:102.5px;top:43.8px" width="14" height="14" viewBox="0 0 14 14"><circle cx="7" cy="7" r="5.2" stroke="#222" stroke-width="1.3" fill="none"/><path d="M7,6.2 V10" stroke="#222" stroke-width="1.4"/><circle cx="7" cy="4.2" r="0.8" fill="#222"/></svg>
<div style="position:absolute;left:126.2px;top:44.2px;font-size:11px;line-height:14px;letter-spacing:-0.35px;color:#1f1f1f;white-space:nowrap">127.0.0.1<span style="color:#6a6a6a">:8188</span></div>
<svg style="position:absolute;left:859px;top:42px" width="18" height="17" viewBox="0 0 18 17"><rect x="2" y="2" width="8" height="9" rx="1" fill="#555"/><path d="M6,5.5 A1.6,1.6 0 1 0 7.4,7.2 H6" stroke="#eee" stroke-width="0.9" fill="none"/><rect x="8" y="6" width="7.5" height="9" rx="1" fill="#eef2f8" stroke="#555" stroke-width="1"/><path d="M10,9 H13.5 M11.8,8 V9 M10.6,13.5 L13,9.5" stroke="#555" stroke-width="0.9" fill="none"/></svg>
<svg style="position:absolute;left:886px;top:42px" width="16" height="16" viewBox="0 0 16 16"><path d="M8,2.2 L9.7,6.2 L13.8,6.5 L10.7,9.2 L11.6,13.4 L8,11.2 L4.4,13.4 L5.3,9.2 L2.2,6.5 L6.3,6.2 Z" stroke="#333" stroke-width="1.3" fill="none" stroke-linejoin="round"/></svg>
<svg style="position:absolute;left:927px;top:42px" width="16" height="16" viewBox="0 0 16 16"><path d="M3,5 H5.6 V3.8 Q5.6,2.4 7,2.4 Q8.4,2.4 8.4,3.8 V5 H11 V7.4 H12.2 Q13.6,7.4 13.6,8.8 Q13.6,10.2 12.2,10.2 H11 V13 H3 Z" stroke="#222" stroke-width="1.5" fill="none" stroke-linejoin="round"/></svg>
<div style="position:absolute;left:955.5px;top:44px;width:1.2px;height:13.5px;background:#8cb2ec"></div>
<div style="position:absolute;left:969.5px;top:42.3px;width:16px;height:16px;background:#8a5cc8;border-radius:50%;color:#fff;font-size:10.5px;line-height:15px;text-align:center">e</div>
<div style="position:absolute;left:1005.1px;top:45.089999999999996px;width:2.2px;height:2.2px;border-radius:50%;background:#222"></div>
<div style="position:absolute;left:1005.1px;top:49.5px;width:2.2px;height:2.2px;border-radius:50%;background:#222"></div>
<div style="position:absolute;left:1005.1px;top:53.910000000000004px;width:2.2px;height:2.2px;border-radius:50%;background:#222"></div>
</div></body></html>
